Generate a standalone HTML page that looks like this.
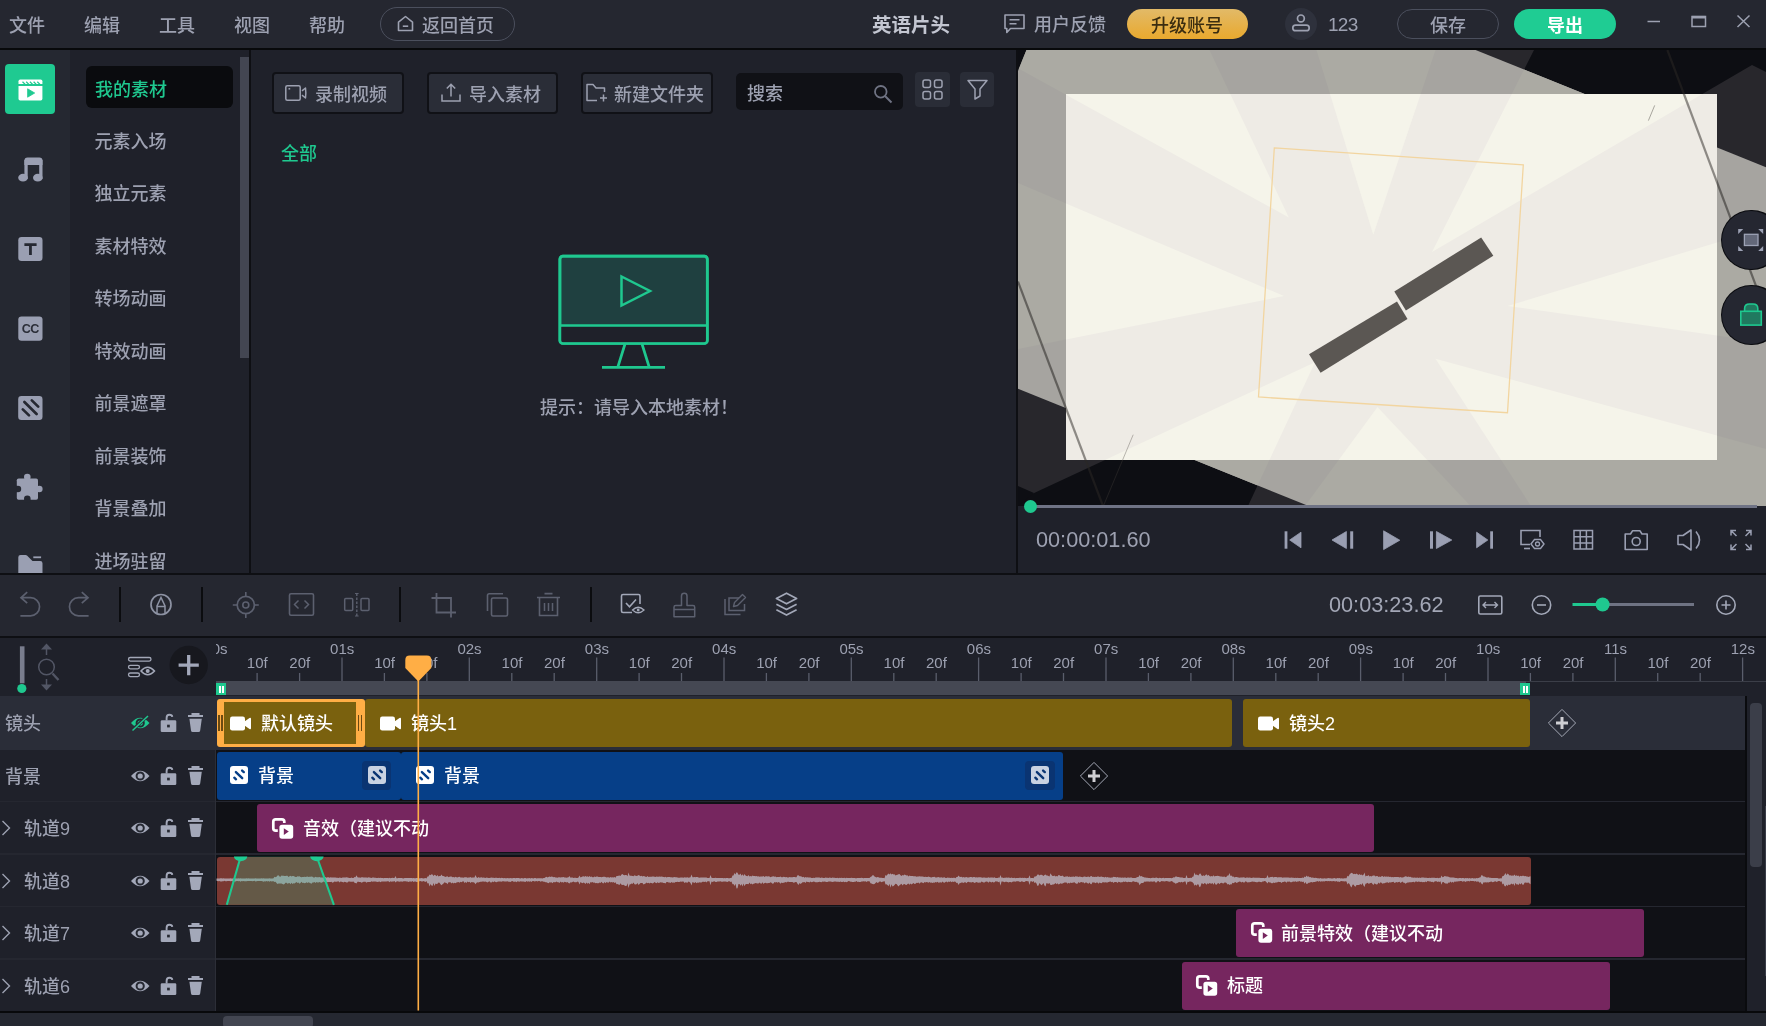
<!DOCTYPE html>
<html lang="zh-CN"><head><meta charset="utf-8"><title>英语片头</title>
<style>
html,body{margin:0;padding:0;background:#1f212a;}
body{width:1766px;height:1026px;overflow:hidden;font-family:"Liberation Sans","Noto Sans CJK SC",sans-serif;font-size:18px;color:#9da1b1;font-weight:500;}
#app{position:relative;width:1766px;height:1026px;overflow:hidden;will-change:transform;}
.abs{position:absolute;}
.t{position:absolute;white-space:nowrap;line-height:24px;height:24px;font-size:18px;}
svg{position:absolute;overflow:visible;}
/* top bar */
#top{position:absolute;left:0;top:0;width:1766px;height:48px;background:#252730;}
#topline{position:absolute;left:0;top:48px;width:1766px;height:2px;background:#08090b;}
.pill{position:absolute;box-sizing:border-box;border-radius:20px;text-align:center;}
/* left */
#iconcol{position:absolute;left:0;top:50px;width:70px;height:523px;background:#252831;}
#listcol{position:absolute;left:70px;top:50px;width:180px;height:523px;background:#1f212a;overflow:hidden;}
.vline{position:absolute;width:2px;background:#0e0f13;}
.hline{position:absolute;height:2px;background:#0e0f13;}
.btn{position:absolute;box-sizing:border-box;background:#2a2d37;border:2px solid #101116;border-radius:4px;}
.sq{position:absolute;background:#2a2d37;border-radius:4px;}
/* timeline */
.clip{position:absolute;border-radius:3px;height:48px;}
.ct{position:absolute;top:12px;color:#fff;font-size:18px;line-height:24px;white-space:nowrap;}
.rl{position:absolute;font-size:15px;line-height:15px;color:#9da1b1;white-space:nowrap;transform:translateX(-50%);}

</style></head>
<body>
<div id="app">
<div id="top"></div><div id="topline"></div>
<div class="t" style="left:9px;top:14px;">文件</div>
<div class="t" style="left:84px;top:14px;">编辑</div>
<div class="t" style="left:159px;top:14px;">工具</div>
<div class="t" style="left:234px;top:14px;">视图</div>
<div class="t" style="left:309px;top:14px;">帮助</div>
<div class="pill" style="left:380px;top:7px;width:135px;height:34px;border:1px solid #4b4f5d;"></div>
<svg style="left:397px;top:15px;" width="17" height="17" viewBox="0 0 17 17"><path d="M1.5 7.2 L8.5 1.5 L15.5 7.2 V15.5 H1.5 Z" fill="none" stroke="#9da1b1" stroke-width="1.6" stroke-linejoin="round"/><path d="M5.8 11.2 H11.2" stroke="#9da1b1" stroke-width="1.6"/></svg>
<div class="t" style="left:422px;top:14px;">返回首页</div>
<div class="t" style="left:872px;top:13px;font-size:19.5px;font-weight:bold;color:#c3c6d1;">英语片头</div>
<svg style="left:1004px;top:14px;" width="21" height="20" viewBox="0 0 21 20"><path d="M1 1 H20 V14.5 H6.5 L2.8 18.5 V14.5 H1 Z" fill="none" stroke="#9da1b1" stroke-width="1.6" stroke-linejoin="round"/><path d="M5.5 5.8 H15.5 M5.5 9.8 H12.5" stroke="#9da1b1" stroke-width="1.6"/></svg>
<div class="t" style="left:1034px;top:12.6px;">用户反馈</div>
<div class="pill" style="left:1127px;top:8.7px;width:120.5px;height:30.4px;background:linear-gradient(180deg,#e2ba68,#e9a92e);"></div>
<div class="t" style="left:1151px;top:14px;color:#3b2d10;">升级账号</div>
<div class="abs" style="left:1285px;top:8px;width:32px;height:32px;border-radius:50%;background:#2e313c;"></div>
<svg style="left:1290px;top:13px;" width="22" height="20" viewBox="1290 13 22 20"><circle cx="1300.9" cy="18.4" r="3.4" fill="none" stroke="#9da1b1" stroke-width="1.7"/><rect x="1292.8" y="25.1" width="16.4" height="5.6" rx="2.8" fill="none" stroke="#9da1b1" stroke-width="1.7"/></svg>
<div class="t" style="left:1328px;top:13px;font-size:19px;letter-spacing:-0.7px;">123</div>
<div class="pill" style="left:1397px;top:9px;width:102px;height:30px;border:1px solid #4b4f5d;"></div>
<div class="t" style="left:1430px;top:14px;">保存</div>
<div class="pill" style="left:1514px;top:9px;width:102px;height:30px;background:#1fcc93;"></div>
<div class="t" style="left:1547px;top:14px;color:#fff;font-weight:bold;">导出</div>
<svg style="left:1640px;top:10px;" width="120" height="24" viewBox="1640 10 120 24"><path d="M1647.5 21.5 H1660" stroke="#9da1b1" stroke-width="1.5"/><rect x="1692" y="16.5" width="13.5" height="10" fill="none" stroke="#9da1b1" stroke-width="1.5"/><path d="M1692 17.2 H1705.5" stroke="#9da1b1" stroke-width="2.6"/><path d="M1737.5 15.5 L1749.5 27 M1749.5 15.5 L1737.5 27" stroke="#9da1b1" stroke-width="1.5"/></svg>
<div id="iconcol"></div><div id="listcol"></div>
<div class="abs" style="left:5px;top:64px;width:50px;height:50px;border-radius:4px;background:#1fca91;"></div>
<svg style="left:18px;top:79px;" width="25" height="22" viewBox="18 79 25 22"><path d="M18.5 84 V81.2 Q18.5 79.5 20.2 79.5 H40.7 Q42.4 79.5 42.4 81.2 V84 Z" fill="#fff"/><path d="M22.5 81.8 L25.2 84.4 M26.2 81.8 L28.9 84.4 M29.9 81.8 L32.6 84.4 M33.6 81.8 L36.3 84.4 M37.3 81.8 L40 84.4" stroke="#1fca91" stroke-width="1.3"/><path d="M18.5 85.9 H42.4 V98.7 Q42.4 100.4 40.7 100.4 H20.2 Q18.5 100.4 18.5 98.7 Z" fill="#fff"/><path d="M27.6 88.8 L34.7 93 L27.6 97.2 Z" fill="#1fca91" stroke="#1fca91" stroke-width="0.8" stroke-linejoin="round"/></svg>
<svg style="left:18px;top:157px;" width="25" height="25" viewBox="18 157 25 25"><path d="M24.4 165 V160.6 Q24.4 157.4 27.6 157.4 H39.3 Q42.5 157.4 42.5 160.6 V165 Z" fill="#9a9fb2"/><rect x="24.4" y="160" width="3.3" height="19" fill="#9a9fb2"/><rect x="39.2" y="160" width="3.3" height="19" fill="#9a9fb2"/><ellipse cx="23" cy="177.7" rx="4.8" ry="3.9" fill="#9a9fb2"/><ellipse cx="37.8" cy="177.7" rx="4.8" ry="3.9" fill="#9a9fb2"/></svg>
<svg style="left:18px;top:237px;" width="25" height="25" viewBox="0 0 25 25"><rect x="0.3" y="0" width="24.2" height="24" rx="3.2" fill="#9a9fb2"/><path d="M6.4 7.55 H18.6 M12.45 7 V17.9" stroke="#252831" stroke-width="2.8"/></svg>
<svg style="left:18px;top:316px;" width="25" height="26" viewBox="0 0 25 26"><rect x="0.3" y="0.4" width="24.2" height="24.3" rx="3.2" fill="#9a9fb2"/><text x="12.2" y="16.9" font-family="Liberation Sans,sans-serif" font-weight="bold" font-size="12.6" letter-spacing="-0.6" fill="#2b2e38" text-anchor="middle">CC</text></svg>
<svg style="left:18px;top:396px;" width="25" height="25" viewBox="0 0 25 25"><rect x="0.2" y="0" width="24.3" height="24" rx="3.2" fill="#9a9fb2"/><path d="M6.4 6 L18.6 18 M13.8 4.4 L20.2 10.6 M4.8 13.4 L11 19.4" stroke="#252831" stroke-width="2.7" stroke-linecap="round"/></svg>
<svg style="left:16px;top:473px;" width="28" height="28" viewBox="16 473 28 28"><rect x="16.8" y="478.4" width="21.2" height="21.3" rx="1.8" fill="#9a9fb2"/><circle cx="27.3" cy="477" r="3.3" fill="#9a9fb2"/><circle cx="39.3" cy="489" r="3.3" fill="#9a9fb2"/><circle cx="17.9" cy="489" r="3.3" fill="#252831"/><circle cx="27.3" cy="498.8" r="3.3" fill="#252831"/><rect x="14" y="485.7" width="2.8" height="6.6" fill="#252831"/><rect x="24" y="499.7" width="6.6" height="2.5" fill="#252831"/></svg>
<svg style="left:18px;top:554.9px;" width="25" height="18.2" viewBox="0 0 25 18.2"><path d="M0.3 18.2 V2.3 Q0.3 0 2.6 0 H7.6 Q8.4 0 9 0.6 L14.5 5.9 H22.2 Q24.5 5.9 24.5 8.2 V18.2 Z" fill="#9a9fb2"/><path d="M15.3 2.3 H23.1" stroke="#9a9fb2" stroke-width="1.8"/></svg>
<div class="abs" style="left:86px;top:66px;width:147px;height:42px;border-radius:6px;background:#0a0b0e;"></div>
<div class="t" style="left:95px;top:78px;color:#1fc88f;">我的素材</div>
<div class="t" style="left:94.4px;top:129.7px;">元素入场</div>
<div class="t" style="left:94.4px;top:182.2px;">独立元素</div>
<div class="t" style="left:94.4px;top:234.7px;">素材特效</div>
<div class="t" style="left:94.4px;top:287.2px;">转场动画</div>
<div class="t" style="left:94.4px;top:339.7px;">特效动画</div>
<div class="t" style="left:94.4px;top:392.2px;">前景遮罩</div>
<div class="t" style="left:94.4px;top:444.7px;">前景装饰</div>
<div class="t" style="left:94.4px;top:497.2px;">背景叠加</div>
<div class="t" style="left:94.4px;top:549.7px;">进场驻留</div>
<div class="abs" style="left:240px;top:57px;width:9.3px;height:300.5px;background:#434652;"></div>
<div class="vline" style="left:249px;top:50px;height:523px;"></div>
<div class="vline" style="left:1016px;top:50px;height:523px;"></div>
<div class="btn" style="left:272px;top:72px;width:132px;height:42px;"></div>
<div class="btn" style="left:427px;top:72px;width:131px;height:42px;"></div>
<div class="btn" style="left:581px;top:72px;width:132px;height:42px;"></div>
<svg style="left:285px;top:85px;" width="22" height="16" viewBox="0 0 22 16"><rect x="0.8" y="0.8" width="14.4" height="14.4" rx="1.5" fill="none" stroke="#9da1b1" stroke-width="1.5"/><path d="M17 5.8 L20.5 3 Q21.2 8 20.5 13 L17 10.2" fill="none" stroke="#9da1b1" stroke-width="1.5" stroke-linejoin="round"/><path d="M3.5 3.8 H5.2" stroke="#9da1b1" stroke-width="1.5"/></svg>
<div class="t" style="left:315px;top:83px;">录制视频</div>
<svg style="left:441px;top:83px;" width="20" height="19" viewBox="0 0 20 19"><path d="M1 11.5 V18 H19 V11.5" fill="none" stroke="#9da1b1" stroke-width="1.5"/><path d="M10 13.5 V1.5 M5.8 5.5 L10 1.2 L14.2 5.5" fill="none" stroke="#9da1b1" stroke-width="1.5"/></svg>
<div class="t" style="left:469px;top:83px;">导入素材</div>
<svg style="left:586px;top:83px;" width="22" height="19" viewBox="0 0 22 19"><path d="M11 17.5 H1 V1.5 H7 L10 5 H18.5 V9" fill="none" stroke="#9da1b1" stroke-width="1.5" stroke-linejoin="round"/><path d="M17.5 11.5 V18.5 M14 15 H21" stroke="#9da1b1" stroke-width="1.5"/></svg>
<div class="t" style="left:614px;top:83px;">新建文件夹</div>
<div class="abs" style="left:736px;top:73px;width:167px;height:37px;border-radius:5px;background:#101116;"></div>
<div class="t" style="left:747px;top:82px;">搜索</div>
<svg style="left:873px;top:84px;" width="20" height="20" viewBox="0 0 20 20"><circle cx="7.8" cy="7.8" r="5.8" fill="none" stroke="#6f7383" stroke-width="1.8"/><path d="M12 12 L18.5 18.5" stroke="#6f7383" stroke-width="2"/></svg>
<div class="sq" style="left:915px;top:72px;width:35px;height:35px;"></div>
<div class="sq" style="left:960px;top:72px;width:34px;height:35px;"></div>
<svg style="left:922px;top:79px;" width="21" height="21" viewBox="0 0 21 21"><rect x="1" y="1" width="7.5" height="7.5" rx="2" fill="none" stroke="#9da1b1" stroke-width="1.5"/><rect x="12.5" y="1" width="7.5" height="7.5" rx="2" fill="none" stroke="#9da1b1" stroke-width="1.5"/><rect x="1" y="12.5" width="7.5" height="7.5" rx="2" fill="none" stroke="#9da1b1" stroke-width="1.5"/><rect x="12.5" y="12.5" width="7.5" height="7.5" rx="2" fill="none" stroke="#9da1b1" stroke-width="1.5"/></svg>
<svg style="left:967px;top:79px;" width="21" height="21" viewBox="0 0 21 21"><path d="M1 1.5 H20 L13 10 V17 L8 20 V10 Z" fill="none" stroke="#9da1b1" stroke-width="1.5" stroke-linejoin="round"/></svg>
<div class="t" style="left:281px;top:142px;color:#1fc88f;">全部</div>
<svg style="left:556px;top:253px;" width="156" height="118" viewBox="556 253 156 118"><rect x="559.9" y="256.2" width="147.4" height="87.3" rx="3" fill="#1f4040" stroke="#1fc88f" stroke-width="2.7"/><rect x="560.7" y="326.5" width="145.6" height="16" fill="#1f212a"/><rect x="559.9" y="256.2" width="147.4" height="87.3" rx="3" fill="none" stroke="#1fc88f" stroke-width="2.7"/><path d="M559.9 325.5 H707.3" stroke="#1fc88f" stroke-width="2.7"/><path d="M625 344 L618 366.5 M642 344 L649 366.5 M602 367.3 H665" stroke="#1fc88f" stroke-width="2.7" fill="none"/><path d="M621.5 276.5 L650 291 L621.5 305.5 Z" fill="none" stroke="#1fc88f" stroke-width="2.5" stroke-linejoin="miter"/></svg>
<div class="t" style="left:540px;top:395.5px;">提示：请导入本地素材！</div>
<svg style="left:1018px;top:50px;overflow:hidden;" width="748" height="456" viewBox="1018 50 748 456"><defs><clipPath id="rc"><polygon points="1089.4,-106.0 1889.0,217.0 1707.4,667.0 907.8,344.2"/></clipPath><clipPath id="cc"><rect x="1066" y="94" width="651" height="366"/></clipPath><g id="cream"><rect x="1018" y="50" width="748" height="456" fill="#eeebe5"/><polygon points="1284.0,296.0 1018.0,183.0 1018.0,349.0" fill="#f5f4ea"/><polygon points="1288.8,217.4 1209.4,50.0 1018.0,50.0 1018.0,68.3" fill="#f5f4ea"/><polygon points="1373.3,234.8 1316.5,50.0 1435.5,50.0" fill="#f5f4ea"/><polygon points="1432.0,252.0 1534.0,50.0 1766.0,50.0 1766.0,72.0 1752.0,65.0" fill="#f5f4ea"/><polygon points="1507.5,306.0 1766.0,227.7 1766.0,342.4" fill="#f5f4ea"/><polygon points="1435.5,358.7 1766.0,449.0 1766.0,506.0 1531.0,506.0" fill="#f5f4ea"/><polygon points="1377.5,407.0 1305.0,506.0 1470.5,506.0" fill="#f5f4ea"/><polygon points="1315.0,362.3 1006.0,506.0 1248.0,506.0" fill="#f5f4ea"/><polygon points="1034.0,493.0 1018.0,486.0 1018.0,506.0" fill="#f5f4ea"/></g></defs><rect x="1018" y="50" width="748" height="456" fill="#3a3940"/><polygon points="1284.0,296.0 1018.0,183.0 1018.0,349.0" fill="#14151c"/><polygon points="1288.8,217.4 1209.4,50.0 1018.0,50.0 1018.0,68.3" fill="#14151c"/><polygon points="1373.3,234.8 1316.5,50.0 1435.5,50.0" fill="#14151c"/><polygon points="1432.0,252.0 1534.0,50.0 1766.0,50.0 1766.0,72.0 1752.0,65.0" fill="#14151c"/><polygon points="1507.5,306.0 1766.0,227.7 1766.0,342.4" fill="#14151c"/><polygon points="1435.5,358.7 1766.0,449.0 1766.0,506.0 1531.0,506.0" fill="#14151c"/><polygon points="1377.5,407.0 1305.0,506.0 1470.5,506.0" fill="#14151c"/><polygon points="1315.0,362.3 1006.0,506.0 1248.0,506.0" fill="#14151c"/><polygon points="1034.0,493.0 1018.0,486.0 1018.0,506.0" fill="#14151c"/><use href="#cream" clip-path="url(#rc)"/><use href="#cream" clip-path="url(#cc)"/><polygon points="1274.3,147.9 1523.3,164.8 1507.5,412.7 1258.5,397" fill="none" stroke="#f2d5a0" stroke-width="1.3"/><polygon points="1481.2,237.4 1493.3,255.8 1405.9,310.6 1394.3,291.6" fill="#5b5753"/><polygon points="1397,301.6 1407.5,319 1320.6,372.7 1309,354.3" fill="#5b5753"/><path d="M1018 281.6 L1103 506" stroke="rgba(60,56,52,0.55)" stroke-width="2.2"/><path d="M1667.4 50 L1766 312.6" stroke="rgba(60,56,52,0.55)" stroke-width="2.2"/><path d="M1133.2 434.7 L1103.8 505" stroke="rgba(90,85,80,0.4)" stroke-width="1"/><path d="M1654.7 105.4 L1648.4 120.6" stroke="rgba(90,85,80,0.5)" stroke-width="1"/><path fill-rule="evenodd" fill="rgba(0,0,0,0.3)" d="M1018 50 H1766 V506 H1018 Z M1066 94 H1717 V460 H1066 Z"/></svg>
<div class="abs" style="left:1721px;top:209.6px;width:60.6px;height:60.6px;border-radius:50%;background:#0b0c10;"></div>
<div class="abs" style="left:1722.3px;top:210.9px;width:58px;height:58px;border-radius:50%;background:#252731;"></div>
<div class="abs" style="left:1721px;top:284.5px;width:60.6px;height:60.6px;border-radius:50%;background:#0b0c10;"></div>
<div class="abs" style="left:1722.3px;top:285.8px;width:58px;height:58px;border-radius:50%;background:#252731;"></div>
<svg style="left:1736px;top:226px;" width="30" height="28" viewBox="1736 226 30 28"><rect x="1744.4" y="234.3" width="13.6" height="11.2" fill="#636879" stroke="#9da2b5" stroke-width="1.3"/><path d="M1738.2 229.1 H1743.2 L1738.2 234.1 Z M1763.2 229.1 V234.1 L1758.2 229.1 Z M1738.2 251 V246 L1743.2 251 Z M1763.2 251 H1758.2 L1763.2 246 Z" fill="#9da2b5"/></svg>
<svg style="left:1736px;top:300px;" width="30" height="28" viewBox="1736 300 30 28"><path d="M1744.6 311 V308.5 Q1744.6 304 1749.5 304 H1753 Q1757.8 304 1757.8 308.5 V311" fill="#20795f" stroke="#1fc88f" stroke-width="1.6"/><rect x="1740.8" y="311.3" width="20.5" height="13.8" fill="#20795f" stroke="#1fc88f" stroke-width="1.6"/></svg>
<div class="abs" style="left:1030px;top:505px;width:727px;height:3px;background:#6f7385;"></div>
<div class="abs" style="left:1024px;top:499.5px;width:13px;height:13px;border-radius:50%;background:#1fc88f;"></div>
<div class="t" style="left:1036px;top:527.5px;font-size:21.7px;color:#9da1b1;">00:00:01.60</div>
<svg style="left:1280px;top:525px;" width="480" height="30" viewBox="1280 525 480 30"><path d="M1286 531.3 V548.7" stroke="#9a9fb2" stroke-width="2.8"/><path d="M1301 532.2 V547.8 L1289.7 540 Z" fill="#9a9fb2" stroke="#9a9fb2" stroke-width="0.8" stroke-linejoin="round"/><path d="M1346.4 531.5 V548.5 L1332 540 Z" fill="#9a9fb2" stroke="#9a9fb2" stroke-width="0.8" stroke-linejoin="round"/><path d="M1351.7 531.3 V548.7" stroke="#9a9fb2" stroke-width="3"/><path d="M1383.6 530.8 V549.6 L1399.8 540.2 Z" fill="#9a9fb2" stroke="#9a9fb2" stroke-width="0.8" stroke-linejoin="round"/><path d="M1436.4 531.5 V548.5 L1451.8 540 Z" fill="#9a9fb2" stroke="#9a9fb2" stroke-width="0.8" stroke-linejoin="round"/><path d="M1431.5 531.3 V548.7" stroke="#9a9fb2" stroke-width="3"/><path d="M1476.6 532.2 V547.8 L1487.8 540 Z" fill="#9a9fb2" stroke="#9a9fb2" stroke-width="0.8" stroke-linejoin="round"/><path d="M1491.6 531.3 V548.7" stroke="#9a9fb2" stroke-width="2.8"/><path d="M1530 544.5 H1521 V530.5 H1540 V537" fill="none" stroke="#9a9fb2" stroke-width="1.6"/><path d="M1524 548.5 H1530" stroke="#9a9fb2" stroke-width="1.6"/><path d="M1531 544 L1534.5 539.5 H1540.5 L1544 544 L1540.5 548.5 H1534.5 Z" fill="none" stroke="#9a9fb2" stroke-width="1.4"/><circle cx="1537.5" cy="544" r="2" fill="none" stroke="#9a9fb2" stroke-width="1.3"/><rect x="1574" y="530.5" width="18.5" height="18.5" fill="none" stroke="#9a9fb2" stroke-width="1.5"/><path d="M1580.2 530.5 V549 M1586.4 530.5 V549 M1574 536.7 H1592.5 M1574 542.9 H1592.5" stroke="#9a9fb2" stroke-width="1.5"/><path d="M1625.2 534 H1630.5 L1632.5 530.8 H1640 L1642 534 H1647.2 V549.5 H1625.2 Z" fill="none" stroke="#9a9fb2" stroke-width="1.6" stroke-linejoin="round"/><circle cx="1636.2" cy="541.5" r="4" fill="none" stroke="#9a9fb2" stroke-width="1.6"/><path d="M1678 535.5 H1683 L1691 530 V550 L1683 544.5 H1678 Z" fill="none" stroke="#9a9fb2" stroke-width="1.6" stroke-linejoin="round"/><path d="M1696 531.5 Q1703 540 1696 548.5" fill="none" stroke="#9a9fb2" stroke-width="1.6"/><path d="M1731 535.5 V530.5 H1736 M1731 530.5 L1736.5 536 M1746 530.5 H1751 V535.5 M1751 530.5 L1745.5 536 M1731 544.5 V549.5 H1736 M1731 549.5 L1736.5 544 M1746 549.5 H1751 V544.5 M1751 549.5 L1745.5 544" fill="none" stroke="#9a9fb2" stroke-width="1.5"/></svg>
<div class="hline" style="left:0;top:573px;width:1766px;height:2px;"></div>
<div class="abs" style="left:0;top:575px;width:1766px;height:61px;background:#252730;"></div>
<div class="hline" style="left:0;top:636px;width:1766px;height:2px;"></div>
<svg style="left:0;top:575px;" width="1766" height="61" viewBox="0 575 1766 61"><path d="M120 587 V622" stroke="#0b0c0f" stroke-width="2"/><path d="M202 587 V622" stroke="#0b0c0f" stroke-width="2"/><path d="M400 587 V622" stroke="#0b0c0f" stroke-width="2"/><path d="M591 587 V622" stroke="#0b0c0f" stroke-width="2"/><path d="M20.4 615.8 H30.5 A9.05 9.05 0 0 0 30.5 597.7 H21 M27.2 592.2 L21 597.7 L27.2 603.2" fill="none" stroke="#5c606f" stroke-width="1.7"/><path d="M88.6 615.8 H78.5 A9.05 9.05 0 0 1 78.5 597.7 H88 M81.8 592.2 L88 597.7 L81.8 603.2" fill="none" stroke="#5c606f" stroke-width="1.7"/><circle cx="161" cy="604.5" r="10" fill="none" stroke="#8d92a3" stroke-width="1.7"/><path d="M157 613.5 V606 L161 597.5 L165 606 V613.5 M157 606.5 H165" fill="none" stroke="#8d92a3" stroke-width="1.5"/><circle cx="245.8" cy="605" r="8.6" fill="none" stroke="#5c606f" stroke-width="1.7"/><circle cx="245.8" cy="605" r="3" fill="none" stroke="#5c606f" stroke-width="1.6"/><path d="M245.8 592 V596.4 M245.8 613.6 V618 M232.8 605 H237.2 M254.4 605 H258.8" stroke="#5c606f" stroke-width="1.6"/><rect x="289.5" y="593.8" width="24" height="21.5" rx="1.5" fill="none" stroke="#5c606f" stroke-width="1.6"/><path d="M298.5 600.5 L294.5 604.5 L298.5 608.5 M304.5 600.5 L308.5 604.5 L304.5 608.5" fill="none" stroke="#5c606f" stroke-width="1.5"/><rect x="344.7" y="598.5" width="8" height="12" rx="1" fill="none" stroke="#5c606f" stroke-width="1.5"/><rect x="361" y="598.5" width="8" height="12" rx="1" fill="none" stroke="#5c606f" stroke-width="1.5"/><path d="M356.8 593.5 V616" stroke="#5c606f" stroke-width="1.4" stroke-dasharray="2.5 1.5"/><path d="M355 593.5 H358.6 M355 616 H358.6" stroke="#5c606f" stroke-width="1.2"/><path d="M436.5 593 V612.5 H456 M431.5 598 H451 V617.5" fill="none" stroke="#5c606f" stroke-width="1.8"/><rect x="491.5" y="598" width="16" height="18" rx="1.5" fill="none" stroke="#5c606f" stroke-width="1.6"/><path d="M487.5 611 V595.5 Q487.5 593.8 489.2 593.8 H503" fill="none" stroke="#5c606f" stroke-width="1.6"/><path d="M537 597.5 H560 M544.5 593.6 H552.5 M539.5 598 V615.5 H557.5 V598" fill="none" stroke="#5c606f" stroke-width="1.6"/><path d="M544.5 603 V611 M548.5 603 V611 M552.5 603 V611" stroke="#5c606f" stroke-width="1.5"/><path d="M632 612.5 H623 Q621.5 612.5 621.5 611 V596 Q621.5 594.5 623 594.5 H638.5 Q640 594.5 640 596 V604" fill="none" stroke="#a3a8b8" stroke-width="1.6"/><path d="M626 603 L629.5 606.8 L636 599.5" fill="none" stroke="#a3a8b8" stroke-width="1.6"/><path d="M632.5 610 Q638.2 604.5 644 610 Q638.2 615.5 632.5 610 Z" fill="none" stroke="#a3a8b8" stroke-width="1.3"/><circle cx="638.2" cy="610" r="1.4" fill="#a3a8b8"/><path d="M681.5 605.5 V596 Q681.5 593.3 684.3 593.3 Q687 593.3 687 596 V605.5 H693 Q694.7 605.5 694.7 607.2 V616.7 H674 V607.2 Q674 605.5 675.7 605.5 Z M674 609.5 H694.7" fill="none" stroke="#5c606f" stroke-width="1.5" stroke-linejoin="round"/><path d="M725 599 V614.5 H740.5 M739 598 H729 V610.5 H744.5 V604" fill="none" stroke="#5c606f" stroke-width="1.5"/><path d="M733.5 606.5 L734.5 602.5 L742.5 594.5 L745.5 597.5 L737.5 605.5 Z" fill="none" stroke="#5c606f" stroke-width="1.4" stroke-linejoin="round"/><path d="M786.5 593.2 L796.6 598.5 L786.5 603.8 L776.4 598.5 Z" fill="none" stroke="#a3a8b8" stroke-width="1.7" stroke-linejoin="round"/><path d="M776.4 604.2 L786.5 609.5 L796.6 604.2 M776.4 609.8 L786.5 615.1 L796.6 609.8" fill="none" stroke="#a3a8b8" stroke-width="1.7" stroke-linejoin="round"/><rect x="1478.8" y="596" width="23" height="18" rx="1.5" fill="none" stroke="#a3a8b8" stroke-width="1.6"/><path d="M1483 605 H1497.5 M1486 602 L1483 605 L1486 608 M1494.5 602 L1497.5 605 L1494.5 608" fill="none" stroke="#a3a8b8" stroke-width="1.4"/><circle cx="1541.5" cy="605" r="9.2" fill="none" stroke="#a3a8b8" stroke-width="1.6"/><path d="M1537 605 H1546" stroke="#a3a8b8" stroke-width="1.6"/><circle cx="1726" cy="605" r="9.2" fill="none" stroke="#a3a8b8" stroke-width="1.6"/><path d="M1721.5 605 H1730.5 M1726 600.5 V609.5" stroke="#a3a8b8" stroke-width="1.6"/><path d="M1572.5 604.5 H1602" stroke="#1fc88f" stroke-width="3"/><path d="M1602 604.5 H1694" stroke="#6f7383" stroke-width="3"/><circle cx="1602.6" cy="604.5" r="7" fill="#1fc88f"/></svg>
<div class="t" style="left:1329px;top:592.5px;font-size:21.7px;color:#a3a7b6;">00:03:23.62</div>
<div class="abs" style="left:0;top:638px;width:216px;height:58px;background:#1f212a;"></div>
<div class="abs" style="left:216px;top:638px;width:1550px;height:43px;background:#1f212a;overflow:hidden;" id="ruler">
<svg style="left:0;top:0;" width="1550" height="43"><path d="M-1.3 19.5 V43" stroke="#5a5e6c" stroke-width="1.3"/><path d="M41.1 35 V43" stroke="#5a5e6c" stroke-width="1.3"/><path d="M83.6 35 V43" stroke="#5a5e6c" stroke-width="1.3"/><path d="M126.0 19.5 V43" stroke="#5a5e6c" stroke-width="1.3"/><path d="M168.4 35 V43" stroke="#5a5e6c" stroke-width="1.3"/><path d="M210.9 35 V43" stroke="#5a5e6c" stroke-width="1.3"/><path d="M253.3 19.5 V43" stroke="#5a5e6c" stroke-width="1.3"/><path d="M295.8 35 V43" stroke="#5a5e6c" stroke-width="1.3"/><path d="M338.2 35 V43" stroke="#5a5e6c" stroke-width="1.3"/><path d="M380.7 19.5 V43" stroke="#5a5e6c" stroke-width="1.3"/><path d="M423.1 35 V43" stroke="#5a5e6c" stroke-width="1.3"/><path d="M465.5 35 V43" stroke="#5a5e6c" stroke-width="1.3"/><path d="M508.0 19.5 V43" stroke="#5a5e6c" stroke-width="1.3"/><path d="M550.4 35 V43" stroke="#5a5e6c" stroke-width="1.3"/><path d="M592.9 35 V43" stroke="#5a5e6c" stroke-width="1.3"/><path d="M635.3 19.5 V43" stroke="#5a5e6c" stroke-width="1.3"/><path d="M677.8 35 V43" stroke="#5a5e6c" stroke-width="1.3"/><path d="M720.2 35 V43" stroke="#5a5e6c" stroke-width="1.3"/><path d="M762.6 19.5 V43" stroke="#5a5e6c" stroke-width="1.3"/><path d="M805.1 35 V43" stroke="#5a5e6c" stroke-width="1.3"/><path d="M847.5 35 V43" stroke="#5a5e6c" stroke-width="1.3"/><path d="M890.0 19.5 V43" stroke="#5a5e6c" stroke-width="1.3"/><path d="M932.4 35 V43" stroke="#5a5e6c" stroke-width="1.3"/><path d="M974.9 35 V43" stroke="#5a5e6c" stroke-width="1.3"/><path d="M1017.3 19.5 V43" stroke="#5a5e6c" stroke-width="1.3"/><path d="M1059.8 35 V43" stroke="#5a5e6c" stroke-width="1.3"/><path d="M1102.2 35 V43" stroke="#5a5e6c" stroke-width="1.3"/><path d="M1144.6 19.5 V43" stroke="#5a5e6c" stroke-width="1.3"/><path d="M1187.1 35 V43" stroke="#5a5e6c" stroke-width="1.3"/><path d="M1229.5 35 V43" stroke="#5a5e6c" stroke-width="1.3"/><path d="M1272.0 19.5 V43" stroke="#5a5e6c" stroke-width="1.3"/><path d="M1314.4 35 V43" stroke="#5a5e6c" stroke-width="1.3"/><path d="M1356.9 35 V43" stroke="#5a5e6c" stroke-width="1.3"/><path d="M1399.3 19.5 V43" stroke="#5a5e6c" stroke-width="1.3"/><path d="M1441.7 35 V43" stroke="#5a5e6c" stroke-width="1.3"/><path d="M1484.2 35 V43" stroke="#5a5e6c" stroke-width="1.3"/><path d="M1526.6 19.5 V43" stroke="#5a5e6c" stroke-width="1.3"/></svg>
<div class="rl" style="left:7.7px;top:3px;transform:none;margin-left:-12px;">0s</div>
<div class="rl" style="left:41.3px;top:16.5px;">10f</div>
<div class="rl" style="left:83.8px;top:16.5px;">20f</div>
<div class="rl" style="left:126.2px;top:3px;">01s</div>
<div class="rl" style="left:168.6px;top:16.5px;">10f</div>
<div class="rl" style="left:211.1px;top:16.5px;">20f</div>
<div class="rl" style="left:253.5px;top:3px;">02s</div>
<div class="rl" style="left:296.0px;top:16.5px;">10f</div>
<div class="rl" style="left:338.4px;top:16.5px;">20f</div>
<div class="rl" style="left:380.9px;top:3px;">03s</div>
<div class="rl" style="left:423.3px;top:16.5px;">10f</div>
<div class="rl" style="left:465.7px;top:16.5px;">20f</div>
<div class="rl" style="left:508.2px;top:3px;">04s</div>
<div class="rl" style="left:550.6px;top:16.5px;">10f</div>
<div class="rl" style="left:593.1px;top:16.5px;">20f</div>
<div class="rl" style="left:635.5px;top:3px;">05s</div>
<div class="rl" style="left:678.0px;top:16.5px;">10f</div>
<div class="rl" style="left:720.4px;top:16.5px;">20f</div>
<div class="rl" style="left:762.9px;top:3px;">06s</div>
<div class="rl" style="left:805.3px;top:16.5px;">10f</div>
<div class="rl" style="left:847.7px;top:16.5px;">20f</div>
<div class="rl" style="left:890.2px;top:3px;">07s</div>
<div class="rl" style="left:932.6px;top:16.5px;">10f</div>
<div class="rl" style="left:975.1px;top:16.5px;">20f</div>
<div class="rl" style="left:1017.5px;top:3px;">08s</div>
<div class="rl" style="left:1060.0px;top:16.5px;">10f</div>
<div class="rl" style="left:1102.4px;top:16.5px;">20f</div>
<div class="rl" style="left:1144.8px;top:3px;">09s</div>
<div class="rl" style="left:1187.3px;top:16.5px;">10f</div>
<div class="rl" style="left:1229.7px;top:16.5px;">20f</div>
<div class="rl" style="left:1272.2px;top:3px;">10s</div>
<div class="rl" style="left:1314.6px;top:16.5px;">10f</div>
<div class="rl" style="left:1357.1px;top:16.5px;">20f</div>
<div class="rl" style="left:1399.5px;top:3px;">11s</div>
<div class="rl" style="left:1441.9px;top:16.5px;">10f</div>
<div class="rl" style="left:1484.4px;top:16.5px;">20f</div>
<div class="rl" style="left:1526.8px;top:3px;">12s</div>
</div>
<div class="abs" style="left:216px;top:681px;width:1550px;height:14px;background:#1f212a;"></div>
<div class="abs" style="left:216px;top:680.8px;width:1550px;height:1.2px;background:#3b3e48;"></div>
<div class="abs" style="left:216px;top:681px;width:1310px;height:14px;background:#454853;"></div>
<div class="abs" style="left:216px;top:683px;width:10px;height:12px;background:#1fc88f;"></div>
<div class="abs" style="left:219px;top:685.5px;width:1.5px;height:7px;background:#fff;"></div><div class="abs" style="left:222px;top:685.5px;width:1.5px;height:7px;background:#fff;"></div>
<div class="abs" style="left:1520px;top:683px;width:10px;height:12px;background:#1fc88f;"></div>
<div class="abs" style="left:1523px;top:685.5px;width:1.5px;height:7px;background:#fff;"></div><div class="abs" style="left:1526px;top:685.5px;width:1.5px;height:7px;background:#fff;"></div>
<svg style="left:0;top:638px;" width="216" height="58" viewBox="0 638 216 58"><rect x="19.9" y="646.3" width="4.6" height="37" fill="#797d8d"/><circle cx="21.8" cy="688.5" r="4.6" fill="#1fc88f"/><circle cx="46.5" cy="667" r="7.8" fill="none" stroke="#525665" stroke-width="1.5"/><path d="M52.5 673.5 L58.5 680" stroke="#525665" stroke-width="2.4"/><path d="M46.5 655 V647" stroke="#525665" stroke-width="1.5"/><path d="M41 649.5 L46.5 643.5 L52 649.5 Z" fill="#525665"/><path d="M46.5 679 V687" stroke="#525665" stroke-width="1.5"/><path d="M41 684.5 L46.5 690.5 L52 684.5 Z" fill="#525665"/><rect x="128.5" y="657.5" width="22.5" height="3.6" rx="1.8" fill="none" stroke="#a3a8b8" stroke-width="1.3"/><rect x="128.5" y="665.3" width="11" height="3.6" rx="1.8" fill="none" stroke="#a3a8b8" stroke-width="1.3"/><rect x="128.5" y="673" width="11" height="3.6" rx="1.8" fill="none" stroke="#a3a8b8" stroke-width="1.3"/><path d="M141 671 Q147.7 663.5 154.5 671 Q147.7 678.5 141 671 Z" fill="none" stroke="#a3a8b8" stroke-width="1.5"/><circle cx="147.7" cy="671" r="2" fill="#a3a8b8"/><circle cx="188.7" cy="665" r="19.2" fill="#17181e"/><path d="M178.6 665.2 H198.8 M188.7 655.1 V675.3" stroke="#a3a8ba" stroke-width="3.3"/></svg>
<div class="abs" style="left:0;top:696px;width:216px;height:315px;background:#1f212a;"></div>
<div class="abs" style="left:216px;top:696px;width:1529px;height:315px;background:#101116;"></div>
<div class="abs" style="left:0;top:696px;width:1745px;height:54px;background:#2a2d38;"></div>
<div class="abs" style="left:0;top:800.7px;width:1745px;height:1.6px;background:#252730;"></div>
<div class="abs" style="left:0;top:853.2px;width:1745px;height:1.6px;background:#252730;"></div>
<div class="abs" style="left:0;top:905.6px;width:1745px;height:1.6px;background:#252730;"></div>
<div class="abs" style="left:0;top:958.0px;width:1745px;height:1.6px;background:#252730;"></div>
<div class="abs" style="left:215px;top:750px;width:1.3px;height:261px;background:#2c2e37;"></div>
<div class="abs" style="left:1745px;top:696px;width:21px;height:315px;background:#1f212a;"></div>
<div class="abs" style="left:1745px;top:696px;width:2px;height:315px;background:#0a0b0e;"></div>
<div class="abs" style="left:1749.6px;top:703px;width:12.4px;height:164px;border-radius:4px;background:#3b3e49;"></div>
<div class="abs" style="left:1764.5px;top:806px;width:1.5px;height:170px;background:#3a3d48;"></div>
<div class="abs" style="left:0;top:1011px;width:1766px;height:15px;background:#252831;"></div>
<div class="abs" style="left:0;top:1010.5px;width:1766px;height:2px;background:#08090b;"></div>
<div class="abs" style="left:223px;top:1016px;width:90px;height:12px;border-radius:4px;background:#434651;"></div>
<div class="t" style="left:5px;top:712.0px;color:#9da1b1;">镜头</div>
<svg style="left:128px;top:711.0px;" width="80" height="24" viewBox="128 -12 80 24"><path d="M131 0 Q140.2 -10.5 149.5 0 Q140.2 10.5 131 0 Z" fill="#1fc88f"/><circle cx="140.2" cy="0" r="3.6" fill="none" stroke="#252831" stroke-width="2"/><path d="M132.5 7 L148 -7.5" stroke="#2a2d38" stroke-width="3.4"/><path d="M132.5 7.5 L148 -7" stroke="#1fc88f" stroke-width="1.5"/><rect x="160.7" y="-2.7" width="15.6" height="11.8" rx="1.3" fill="#a3a8b9"/><path d="M166.6 -2.5 V-5 Q166.6 -8.2 169.4 -8.2 Q172 -8.2 172.3 -6.2" fill="none" stroke="#a3a8b9" stroke-width="1.9"/><rect x="167.1" y="1.7" width="2.7" height="2.7" fill="#252831"/><path d="M188 -7 H203 M192.6 -8 V-9 H198.4 V-8" fill="none" stroke="#a3a8b9" stroke-width="2.2"/><path d="M189.4 -4.3 H201.8 L200.2 7.6 Q200 9.1 198.5 9.1 H192.7 Q191.2 9.1 191 7.6 Z" fill="#a3a8b9"/></svg>
<div class="t" style="left:5px;top:764.5px;color:#9da1b1;">背景</div>
<svg style="left:128px;top:763.5px;" width="80" height="24" viewBox="128 -12 80 24"><path d="M131 0 Q140.2 -10.5 149.5 0 Q140.2 10.5 131 0 Z" fill="#a3a8b9"/><circle cx="140.2" cy="0" r="3.6" fill="none" stroke="#252831" stroke-width="2"/><rect x="160.7" y="-2.7" width="15.6" height="11.8" rx="1.3" fill="#a3a8b9"/><path d="M166.6 -2.5 V-5 Q166.6 -8.2 169.4 -8.2 Q172 -8.2 172.3 -6.2" fill="none" stroke="#a3a8b9" stroke-width="1.9"/><rect x="167.1" y="1.7" width="2.7" height="2.7" fill="#252831"/><path d="M188 -7 H203 M192.6 -8 V-9 H198.4 V-8" fill="none" stroke="#a3a8b9" stroke-width="2.2"/><path d="M189.4 -4.3 H201.8 L200.2 7.6 Q200 9.1 198.5 9.1 H192.7 Q191.2 9.1 191 7.6 Z" fill="#a3a8b9"/></svg>
<div class="t" style="left:24px;top:817.0px;color:#9da1b1;">轨道9</div>
<svg style="left:1px;top:819.0px;" width="10" height="18" viewBox="0 0 10 18"><path d="M1.5 2 L8.5 9 L1.5 16" fill="none" stroke="#9da1b1" stroke-width="1.4"/></svg>
<svg style="left:128px;top:816.0px;" width="80" height="24" viewBox="128 -12 80 24"><path d="M131 0 Q140.2 -10.5 149.5 0 Q140.2 10.5 131 0 Z" fill="#a3a8b9"/><circle cx="140.2" cy="0" r="3.6" fill="none" stroke="#252831" stroke-width="2"/><rect x="160.7" y="-2.7" width="15.6" height="11.8" rx="1.3" fill="#a3a8b9"/><path d="M166.6 -2.5 V-5 Q166.6 -8.2 169.4 -8.2 Q172 -8.2 172.3 -6.2" fill="none" stroke="#a3a8b9" stroke-width="1.9"/><rect x="167.1" y="1.7" width="2.7" height="2.7" fill="#252831"/><path d="M188 -7 H203 M192.6 -8 V-9 H198.4 V-8" fill="none" stroke="#a3a8b9" stroke-width="2.2"/><path d="M189.4 -4.3 H201.8 L200.2 7.6 Q200 9.1 198.5 9.1 H192.7 Q191.2 9.1 191 7.6 Z" fill="#a3a8b9"/></svg>
<div class="t" style="left:24px;top:869.5px;color:#9da1b1;">轨道8</div>
<svg style="left:1px;top:871.5px;" width="10" height="18" viewBox="0 0 10 18"><path d="M1.5 2 L8.5 9 L1.5 16" fill="none" stroke="#9da1b1" stroke-width="1.4"/></svg>
<svg style="left:128px;top:868.5px;" width="80" height="24" viewBox="128 -12 80 24"><path d="M131 0 Q140.2 -10.5 149.5 0 Q140.2 10.5 131 0 Z" fill="#a3a8b9"/><circle cx="140.2" cy="0" r="3.6" fill="none" stroke="#252831" stroke-width="2"/><rect x="160.7" y="-2.7" width="15.6" height="11.8" rx="1.3" fill="#a3a8b9"/><path d="M166.6 -2.5 V-5 Q166.6 -8.2 169.4 -8.2 Q172 -8.2 172.3 -6.2" fill="none" stroke="#a3a8b9" stroke-width="1.9"/><rect x="167.1" y="1.7" width="2.7" height="2.7" fill="#252831"/><path d="M188 -7 H203 M192.6 -8 V-9 H198.4 V-8" fill="none" stroke="#a3a8b9" stroke-width="2.2"/><path d="M189.4 -4.3 H201.8 L200.2 7.6 Q200 9.1 198.5 9.1 H192.7 Q191.2 9.1 191 7.6 Z" fill="#a3a8b9"/></svg>
<div class="t" style="left:24px;top:922.0px;color:#9da1b1;">轨道7</div>
<svg style="left:1px;top:924.0px;" width="10" height="18" viewBox="0 0 10 18"><path d="M1.5 2 L8.5 9 L1.5 16" fill="none" stroke="#9da1b1" stroke-width="1.4"/></svg>
<svg style="left:128px;top:921.0px;" width="80" height="24" viewBox="128 -12 80 24"><path d="M131 0 Q140.2 -10.5 149.5 0 Q140.2 10.5 131 0 Z" fill="#a3a8b9"/><circle cx="140.2" cy="0" r="3.6" fill="none" stroke="#252831" stroke-width="2"/><rect x="160.7" y="-2.7" width="15.6" height="11.8" rx="1.3" fill="#a3a8b9"/><path d="M166.6 -2.5 V-5 Q166.6 -8.2 169.4 -8.2 Q172 -8.2 172.3 -6.2" fill="none" stroke="#a3a8b9" stroke-width="1.9"/><rect x="167.1" y="1.7" width="2.7" height="2.7" fill="#252831"/><path d="M188 -7 H203 M192.6 -8 V-9 H198.4 V-8" fill="none" stroke="#a3a8b9" stroke-width="2.2"/><path d="M189.4 -4.3 H201.8 L200.2 7.6 Q200 9.1 198.5 9.1 H192.7 Q191.2 9.1 191 7.6 Z" fill="#a3a8b9"/></svg>
<div class="t" style="left:24px;top:974.5px;color:#9da1b1;">轨道6</div>
<svg style="left:1px;top:976.5px;" width="10" height="18" viewBox="0 0 10 18"><path d="M1.5 2 L8.5 9 L1.5 16" fill="none" stroke="#9da1b1" stroke-width="1.4"/></svg>
<svg style="left:128px;top:973.5px;" width="80" height="24" viewBox="128 -12 80 24"><path d="M131 0 Q140.2 -10.5 149.5 0 Q140.2 10.5 131 0 Z" fill="#a3a8b9"/><circle cx="140.2" cy="0" r="3.6" fill="none" stroke="#252831" stroke-width="2"/><rect x="160.7" y="-2.7" width="15.6" height="11.8" rx="1.3" fill="#a3a8b9"/><path d="M166.6 -2.5 V-5 Q166.6 -8.2 169.4 -8.2 Q172 -8.2 172.3 -6.2" fill="none" stroke="#a3a8b9" stroke-width="1.9"/><rect x="167.1" y="1.7" width="2.7" height="2.7" fill="#252831"/><path d="M188 -7 H203 M192.6 -8 V-9 H198.4 V-8" fill="none" stroke="#a3a8b9" stroke-width="2.2"/><path d="M189.4 -4.3 H201.8 L200.2 7.6 Q200 9.1 198.5 9.1 H192.7 Q191.2 9.1 191 7.6 Z" fill="#a3a8b9"/></svg>
<div class="clip" style="left:365px;top:699px;width:866.5px;background:#7a610e;"></div>
<div class="clip" style="left:1242.5px;top:699px;width:287.5px;background:#7a610e;"></div>
<div class="clip" style="left:216.5px;top:699px;width:148px;background:#ffae45;"></div>
<div class="abs" style="left:224px;top:702.3px;width:131.5px;height:41.5px;background:#7a610e;"></div>
<div class="abs" style="left:218.3px;top:715px;width:1.5px;height:16px;background:#6b4a12;"></div>
<div class="abs" style="left:221.2px;top:715px;width:1.5px;height:16px;background:#6b4a12;"></div>
<div class="abs" style="left:357.8px;top:715px;width:1.5px;height:16px;background:#6b4a12;"></div>
<div class="abs" style="left:360.7px;top:715px;width:1.5px;height:16px;background:#6b4a12;"></div>
<svg style="left:230px;top:716px;" width="22" height="15" viewBox="0 0 22 15"><rect x="0" y="0.5" width="15" height="14" rx="2.2" fill="#fff"/><path d="M14.5 5.5 L19.5 2 Q21 1.2 21 3 V12 Q21 13.8 19.5 13 L14.5 9.5 Z" fill="#fff"/></svg>
<div class="ct" style="left:261px;top:712px;">默认镜头</div>
<svg style="left:380px;top:716px;" width="22" height="15" viewBox="0 0 22 15"><rect x="0" y="0.5" width="15" height="14" rx="2.2" fill="#fff"/><path d="M14.5 5.5 L19.5 2 Q21 1.2 21 3 V12 Q21 13.8 19.5 13 L14.5 9.5 Z" fill="#fff"/></svg>
<div class="ct" style="left:411px;top:712px;">镜头1</div>
<svg style="left:1258px;top:716px;" width="22" height="15" viewBox="0 0 22 15"><rect x="0" y="0.5" width="15" height="14" rx="2.2" fill="#fff"/><path d="M14.5 5.5 L19.5 2 Q21 1.2 21 3 V12 Q21 13.8 19.5 13 L14.5 9.5 Z" fill="#fff"/></svg>
<div class="ct" style="left:1289px;top:712px;">镜头2</div>
<div class="clip" style="left:216.5px;top:751.7px;width:184px;background:#063f88;"></div>
<div class="clip" style="left:401px;top:751.7px;width:662px;background:#063f88;"></div>
<svg style="left:230px;top:766.4px;" width="18" height="18" viewBox="0 0 18 18"><rect x="0" y="0" width="18" height="18" rx="3" fill="#fff"/><path d="M5.9 6.1 L12.2 12.2 M12.1 4.6 L13.8 6.1 M4.3 11.7 L6 13.3" stroke="#063f88" stroke-width="2.4" stroke-linecap="round"/></svg>
<div class="ct" style="left:258px;top:764px;">背景</div>
<svg style="left:416px;top:766.4px;" width="18" height="18" viewBox="0 0 18 18"><rect x="0" y="0" width="18" height="18" rx="3" fill="#fff"/><path d="M5.9 6.1 L12.2 12.2 M12.1 4.6 L13.8 6.1 M4.3 11.7 L6 13.3" stroke="#063f88" stroke-width="2.4" stroke-linecap="round"/></svg>
<div class="ct" style="left:444px;top:764px;">背景</div>
<div class="abs" style="left:361.6px;top:760.5px;width:29.8px;height:29.6px;border-radius:4px;background:#0a3472;"></div>
<svg style="left:367.8px;top:766.4px;" width="18" height="18" viewBox="0 0 18 18"><rect x="0" y="0" width="18" height="18" rx="3" fill="#c9d2e2"/><path d="M5.9 6.1 L12.2 12.2 M12.1 4.6 L13.8 6.1 M4.3 11.7 L6 13.3" stroke="#0a3472" stroke-width="2.4" stroke-linecap="round"/></svg>
<div class="abs" style="left:1025.1px;top:760.5px;width:29.8px;height:29.6px;border-radius:4px;background:#0a3472;"></div>
<svg style="left:1031.3px;top:766.4px;" width="18" height="18" viewBox="0 0 18 18"><rect x="0" y="0" width="18" height="18" rx="3" fill="#c9d2e2"/><path d="M5.9 6.1 L12.2 12.2 M12.1 4.6 L13.8 6.1 M4.3 11.7 L6 13.3" stroke="#0a3472" stroke-width="2.4" stroke-linecap="round"/></svg>
<svg style="left:1546px;top:707px;" width="32" height="32" viewBox="-16 -16 32 32"><path d="M0 -13.6 L13.6 0 L0 13.6 L-13.6 0 Z" fill="none" stroke="#a4a8b5" stroke-width="1"/><path d="M-6 0 H6 M0 -6 V6" stroke="#cfcfd3" stroke-width="3"/></svg>
<svg style="left:1078px;top:759.5px;" width="32" height="32" viewBox="-16 -16 32 32"><path d="M0 -13.6 L13.6 0 L0 13.6 L-13.6 0 Z" fill="none" stroke="#a4a8b5" stroke-width="1"/><path d="M-6 0 H6 M0 -6 V6" stroke="#cfcfd3" stroke-width="3"/></svg>
<div class="clip" style="left:257px;top:804.3px;width:1117.3px;background:#76265f;"></div>
<svg style="left:271px;top:816.6px;" width="24" height="24" viewBox="0 0 24 24"><rect x="2.3" y="2.3" width="11" height="11.4" rx="2.4" fill="none" stroke="#fff" stroke-width="2.7"/><rect x="7.6" y="6.9" width="15.4" height="15.6" rx="3.4" fill="#fff" stroke="#76265f" stroke-width="1.6"/><path d="M12.8 11.2 L17.8 14.6 L12.8 18 Z" fill="#76265f"/></svg>
<div class="ct" style="left:303px;top:816.5px;">音效（建议不动</div>
<div class="clip" style="left:216.5px;top:856.6px;width:1314.5px;background:#7a3832;overflow:hidden;" id="aud"></div>
<svg style="left:0;top:0;" width="1766" height="1026" viewBox="0 0 1766 1026"><path d="M216.5 879.8 L216.5 878.6 L217.5 878.4 L218.5 878.4 L219.5 878.6 L220.5 878.2 L221.5 878.3 L222.5 878.5 L223.5 878.2 L224.5 878.6 L225.5 878.6 L226.5 878.5 L227.5 878.6 L228.5 878.4 L229.5 878.4 L230.5 878.3 L231.5 878.4 L232.5 878.5 L233.5 878.4 L234.5 878.4 L235.5 878.3 L236.5 878.5 L237.5 878.4 L238.5 878.2 L239.5 878.6 L240.5 878.2 L241.5 878.5 L242.5 878.4 L243.5 878.6 L244.5 878.5 L245.5 878.6 L246.5 878.2 L247.5 878.5 L248.5 878.2 L249.5 878.6 L250.5 878.4 L251.5 878.6 L252.5 878.4 L253.5 878.4 L254.5 878.6 L255.5 878.2 L256.5 878.5 L257.5 878.6 L258.5 878.6 L259.5 878.6 L260.5 878.5 L261.5 878.3 L262.5 878.5 L263.5 878.2 L264.5 878.4 L265.5 878.5 L266.5 878.6 L267.5 878.4 L268.5 878.6 L269.5 878.2 L270.5 878.5 L271.5 878.4 L272.5 878.5 L273.5 878.2 L274.5 876.8 L275.5 877.2 L276.5 876.7 L277.5 875.5 L278.5 875.2 L279.5 876.4 L280.5 876.7 L281.5 875.4 L282.5 875.8 L283.5 875.8 L284.5 875.9 L285.5 876.0 L286.5 875.8 L287.5 875.7 L288.5 877.0 L289.5 876.2 L290.5 875.8 L291.5 876.6 L292.5 875.9 L293.5 876.1 L294.5 876.4 L295.5 877.0 L296.5 876.9 L297.5 876.3 L298.5 876.4 L299.5 876.3 L300.5 877.0 L301.5 877.3 L302.5 877.1 L303.5 876.9 L304.5 876.7 L305.5 877.0 L306.5 876.7 L307.5 876.5 L308.5 876.9 L309.5 876.8 L310.5 876.8 L311.5 876.5 L312.5 876.8 L313.5 877.5 L314.5 877.5 L315.5 876.8 L316.5 877.3 L317.5 877.2 L318.5 877.2 L319.5 877.0 L320.5 877.5 L321.5 877.5 L322.5 877.4 L323.5 877.6 L324.5 877.2 L325.5 876.9 L326.5 877.7 L327.5 877.3 L328.5 877.2 L329.5 877.7 L330.5 877.3 L331.5 877.6 L332.5 877.5 L333.5 877.5 L334.5 877.5 L335.5 877.5 L336.5 877.8 L337.5 877.8 L338.5 877.9 L339.5 877.5 L340.5 877.7 L341.5 877.9 L342.5 877.4 L343.5 877.4 L344.5 877.5 L345.5 877.5 L346.5 877.3 L347.5 877.4 L348.5 877.8 L349.5 878.0 L350.5 878.0 L351.5 877.4 L352.5 877.9 L353.5 877.9 L354.5 877.0 L355.5 877.2 L356.5 875.3 L357.5 877.2 L358.5 877.5 L359.5 877.6 L360.5 877.7 L361.5 877.3 L362.5 877.2 L363.5 877.6 L364.5 877.6 L365.5 877.6 L366.5 877.4 L367.5 877.7 L368.5 877.3 L369.5 877.4 L370.5 877.7 L371.5 877.9 L372.5 877.6 L373.5 877.6 L374.5 877.8 L375.5 877.8 L376.5 877.9 L377.5 878.1 L378.5 877.8 L379.5 878.0 L380.5 877.7 L381.5 878.1 L382.5 877.9 L383.5 878.2 L384.5 878.0 L385.5 878.1 L386.5 878.0 L387.5 878.1 L388.5 878.2 L389.5 877.7 L390.5 878.2 L391.5 878.1 L392.5 877.8 L393.5 878.0 L394.5 878.1 L395.5 876.1 L396.5 878.2 L397.5 878.2 L398.5 878.0 L399.5 877.9 L400.5 878.1 L401.5 877.9 L402.5 878.2 L403.5 878.4 L404.5 877.9 L405.5 878.1 L406.5 877.9 L407.5 878.0 L408.5 878.0 L409.5 878.1 L410.5 878.0 L411.5 878.0 L412.5 878.2 L413.5 877.9 L414.5 878.2 L415.5 878.3 L416.5 878.0 L417.5 878.0 L418.5 878.4 L419.5 878.3 L420.5 878.3 L421.5 878.0 L422.5 878.2 L423.5 878.4 L424.5 878.3 L425.5 878.0 L426.5 878.4 L427.5 876.5 L428.5 876.5 L429.5 874.4 L430.5 875.2 L431.5 874.3 L432.5 874.6 L433.5 876.0 L434.5 874.7 L435.5 875.2 L436.5 876.3 L437.5 875.1 L438.5 876.6 L439.5 875.9 L440.5 876.0 L441.5 874.5 L442.5 876.1 L443.5 875.9 L444.5 876.5 L445.5 876.9 L446.5 876.4 L447.5 876.2 L448.5 877.2 L449.5 876.7 L450.5 876.6 L451.5 876.5 L452.5 877.3 L453.5 876.9 L454.5 877.4 L455.5 876.7 L456.5 877.3 L457.5 877.6 L458.5 877.1 L459.5 876.8 L460.5 877.5 L461.5 877.4 L462.5 877.5 L463.5 877.8 L464.5 877.3 L465.5 877.3 L466.5 877.2 L467.5 877.8 L468.5 877.5 L469.5 877.6 L470.5 876.9 L471.5 877.8 L472.5 877.4 L473.5 877.6 L474.5 877.5 L475.5 875.0 L476.5 877.2 L477.5 877.9 L478.5 877.1 L479.5 877.7 L480.5 877.5 L481.5 877.3 L482.5 877.7 L483.5 877.6 L484.5 877.7 L485.5 878.1 L486.5 877.6 L487.5 877.7 L488.5 877.9 L489.5 877.9 L490.5 877.7 L491.5 877.6 L492.5 877.8 L493.5 877.8 L494.5 878.1 L495.5 877.8 L496.5 877.7 L497.5 877.9 L498.5 878.0 L499.5 877.7 L500.5 878.2 L501.5 877.8 L502.5 878.0 L503.5 878.2 L504.5 878.1 L505.5 878.2 L506.5 878.3 L507.5 878.0 L508.5 878.3 L509.5 878.2 L510.5 878.0 L511.5 878.2 L512.5 878.3 L513.5 878.1 L514.5 877.9 L515.5 878.2 L516.5 877.9 L517.5 878.1 L518.5 878.0 L519.5 878.2 L520.5 878.4 L521.5 878.1 L522.5 878.2 L523.5 878.4 L524.5 878.0 L525.5 878.1 L526.5 878.4 L527.5 878.2 L528.5 878.2 L529.5 878.1 L530.5 878.4 L531.5 878.1 L532.5 878.3 L533.5 878.5 L534.5 878.0 L535.5 878.1 L536.5 878.4 L537.5 878.2 L538.5 878.2 L539.5 878.3 L540.5 878.3 L541.5 878.2 L542.5 878.5 L543.5 878.0 L544.5 877.9 L545.5 877.3 L546.5 876.7 L547.5 877.4 L548.5 876.9 L549.5 876.6 L550.5 877.1 L551.5 876.6 L552.5 876.8 L553.5 877.2 L554.5 877.1 L555.5 877.5 L556.5 877.6 L557.5 877.7 L558.5 877.3 L559.5 877.3 L560.5 877.6 L561.5 877.3 L562.5 877.2 L563.5 877.1 L564.5 877.4 L565.5 877.5 L566.5 877.7 L567.5 877.6 L568.5 877.2 L569.5 876.0 L570.5 877.7 L571.5 877.4 L572.5 877.6 L573.5 877.9 L574.5 877.8 L575.5 877.8 L576.5 877.9 L577.5 878.0 L578.5 877.4 L579.5 875.4 L580.5 877.4 L581.5 877.1 L582.5 876.4 L583.5 876.3 L584.5 876.7 L585.5 876.1 L586.5 876.7 L587.5 876.2 L588.5 876.9 L589.5 876.1 L590.5 877.0 L591.5 876.6 L592.5 877.2 L593.5 877.3 L594.5 876.5 L595.5 877.0 L596.5 876.6 L597.5 876.6 L598.5 876.9 L599.5 877.1 L600.5 876.9 L601.5 877.3 L602.5 876.9 L603.5 876.8 L604.5 876.8 L605.5 877.0 L606.5 877.4 L607.5 877.2 L608.5 877.3 L609.5 877.8 L610.5 877.1 L611.5 877.4 L612.5 877.3 L613.5 877.4 L614.5 877.0 L615.5 877.8 L616.5 876.0 L617.5 876.1 L618.5 875.8 L619.5 875.5 L620.5 876.0 L621.5 874.6 L622.5 874.1 L623.5 875.1 L624.5 875.2 L625.5 874.9 L626.5 874.9 L627.5 876.2 L628.5 872.5 L629.5 875.4 L630.5 875.7 L631.5 875.8 L632.5 876.1 L633.5 876.3 L634.5 875.3 L635.5 875.8 L636.5 875.9 L637.5 875.7 L638.5 875.0 L639.5 875.5 L640.5 876.2 L641.5 875.8 L642.5 876.6 L643.5 876.0 L644.5 876.3 L645.5 876.8 L646.5 876.9 L647.5 876.1 L648.5 877.0 L649.5 876.7 L650.5 876.7 L651.5 876.8 L652.5 876.5 L653.5 876.5 L654.5 876.8 L655.5 877.1 L656.5 876.5 L657.5 876.8 L658.5 876.8 L659.5 876.6 L660.5 876.8 L661.5 876.6 L662.5 876.7 L663.5 877.0 L664.5 877.2 L665.5 876.8 L666.5 877.4 L667.5 877.1 L668.5 877.0 L669.5 877.1 L670.5 877.2 L671.5 877.3 L672.5 877.5 L673.5 877.2 L674.5 877.1 L675.5 877.2 L676.5 877.3 L677.5 877.4 L678.5 877.8 L679.5 877.8 L680.5 877.4 L681.5 877.5 L682.5 877.6 L683.5 877.7 L684.5 877.3 L685.5 877.6 L686.5 877.4 L687.5 877.3 L688.5 877.7 L689.5 877.5 L690.5 877.2 L691.5 874.6 L692.5 877.3 L693.5 877.2 L694.5 877.1 L695.5 877.2 L696.5 876.9 L697.5 877.1 L698.5 877.4 L699.5 877.8 L700.5 877.5 L701.5 877.5 L702.5 877.5 L703.5 877.4 L704.5 877.4 L705.5 877.6 L706.5 877.6 L707.5 878.0 L708.5 878.0 L709.5 877.9 L710.5 874.9 L711.5 877.8 L712.5 877.9 L713.5 878.0 L714.5 878.1 L715.5 877.7 L716.5 877.9 L717.5 878.1 L718.5 878.1 L719.5 878.1 L720.5 878.1 L721.5 878.0 L722.5 877.9 L723.5 878.2 L724.5 877.9 L725.5 878.2 L726.5 878.0 L727.5 878.0 L728.5 878.3 L729.5 878.3 L730.5 878.0 L731.5 878.0 L732.5 875.4 L733.5 875.5 L734.5 873.1 L735.5 874.5 L736.5 872.3 L737.5 872.8 L738.5 874.7 L739.5 874.7 L740.5 873.6 L741.5 875.8 L742.5 874.3 L743.5 875.9 L744.5 873.9 L745.5 875.5 L746.5 876.0 L747.5 876.2 L748.5 875.0 L749.5 876.5 L750.5 876.1 L751.5 876.5 L752.5 875.5 L753.5 875.9 L754.5 875.9 L755.5 876.3 L756.5 876.1 L757.5 876.6 L758.5 876.3 L759.5 876.8 L760.5 876.4 L761.5 876.5 L762.5 876.6 L763.5 875.9 L764.5 877.0 L765.5 876.2 L766.5 876.2 L767.5 876.6 L768.5 876.3 L769.5 876.4 L770.5 877.2 L771.5 876.8 L772.5 876.6 L773.5 876.3 L774.5 876.8 L775.5 876.5 L776.5 877.2 L777.5 877.0 L778.5 877.1 L779.5 877.1 L780.5 876.6 L781.5 877.2 L782.5 877.2 L783.5 876.7 L784.5 877.1 L785.5 877.2 L786.5 877.1 L787.5 877.6 L788.5 877.4 L789.5 877.1 L790.5 877.3 L791.5 877.3 L792.5 877.2 L793.5 877.1 L794.5 876.9 L795.5 877.3 L796.5 877.3 L797.5 875.3 L798.5 875.2 L799.5 876.3 L800.5 876.3 L801.5 876.6 L802.5 877.3 L803.5 876.8 L804.5 877.8 L805.5 877.0 L806.5 877.6 L807.5 877.2 L808.5 877.6 L809.5 877.5 L810.5 877.6 L811.5 877.9 L812.5 877.9 L813.5 877.7 L814.5 878.0 L815.5 877.5 L816.5 877.6 L817.5 877.6 L818.5 877.6 L819.5 877.5 L820.5 878.0 L821.5 877.6 L822.5 877.7 L823.5 878.0 L824.5 877.9 L825.5 877.6 L826.5 877.8 L827.5 877.8 L828.5 878.0 L829.5 877.6 L830.5 877.8 L831.5 877.9 L832.5 877.6 L833.5 877.8 L834.5 877.8 L835.5 878.0 L836.5 877.9 L837.5 877.8 L838.5 878.2 L839.5 877.8 L840.5 877.9 L841.5 877.7 L842.5 877.9 L843.5 878.1 L844.5 877.8 L845.5 878.2 L846.5 877.7 L847.5 877.9 L848.5 878.1 L849.5 878.1 L850.5 878.1 L851.5 877.7 L852.5 878.0 L853.5 877.9 L854.5 878.0 L855.5 878.2 L856.5 878.2 L857.5 877.9 L858.5 878.0 L859.5 878.1 L860.5 877.9 L861.5 877.8 L862.5 878.1 L863.5 878.3 L864.5 878.1 L865.5 878.1 L866.5 878.0 L867.5 878.1 L868.5 878.1 L869.5 878.1 L870.5 877.0 L871.5 876.4 L872.5 875.3 L873.5 875.3 L874.5 876.5 L875.5 877.0 L876.5 877.4 L877.5 876.9 L878.5 877.3 L879.5 877.8 L880.5 877.8 L881.5 877.7 L882.5 878.1 L883.5 878.1 L884.5 878.3 L885.5 875.0 L886.5 875.7 L887.5 874.4 L888.5 873.6 L889.5 874.6 L890.5 873.2 L891.5 874.4 L892.5 873.7 L893.5 874.6 L894.5 874.2 L895.5 875.5 L896.5 875.0 L897.5 874.8 L898.5 874.3 L899.5 874.1 L900.5 875.2 L901.5 876.0 L902.5 874.9 L903.5 875.5 L904.5 874.6 L905.5 874.9 L906.5 875.5 L907.5 875.2 L908.5 876.4 L909.5 875.6 L910.5 875.9 L911.5 875.9 L912.5 876.0 L913.5 876.3 L914.5 876.3 L915.5 876.3 L916.5 876.8 L917.5 876.6 L918.5 876.5 L919.5 876.2 L920.5 876.4 L921.5 876.6 L922.5 876.5 L923.5 876.8 L924.5 877.0 L925.5 876.8 L926.5 877.1 L927.5 877.0 L928.5 876.5 L929.5 877.1 L930.5 877.2 L931.5 877.5 L932.5 877.0 L933.5 876.9 L934.5 876.8 L935.5 877.6 L936.5 877.5 L937.5 877.3 L938.5 877.1 L939.5 877.4 L940.5 877.6 L941.5 877.3 L942.5 877.7 L943.5 877.6 L944.5 877.3 L945.5 878.0 L946.5 878.0 L947.5 877.5 L948.5 877.8 L949.5 877.7 L950.5 878.0 L951.5 877.7 L952.5 877.9 L953.5 877.8 L954.5 877.7 L955.5 878.2 L956.5 877.1 L957.5 877.1 L958.5 875.6 L959.5 876.8 L960.5 877.1 L961.5 876.8 L962.5 877.4 L963.5 877.0 L964.5 877.6 L965.5 877.3 L966.5 876.9 L967.5 877.4 L968.5 877.4 L969.5 877.3 L970.5 877.1 L971.5 877.0 L972.5 877.5 L973.5 877.1 L974.5 876.9 L975.5 877.5 L976.5 877.2 L977.5 877.5 L978.5 877.3 L979.5 877.3 L980.5 877.3 L981.5 877.5 L982.5 877.8 L983.5 877.5 L984.5 877.5 L985.5 877.8 L986.5 877.8 L987.5 877.7 L988.5 877.2 L989.5 877.8 L990.5 877.4 L991.5 877.5 L992.5 877.5 L993.5 877.7 L994.5 877.3 L995.5 878.1 L996.5 877.9 L997.5 878.0 L998.5 877.6 L999.5 877.7 L1000.5 875.0 L1001.5 877.7 L1002.5 877.6 L1003.5 878.0 L1004.5 877.7 L1005.5 877.8 L1006.5 877.5 L1007.5 877.7 L1008.5 877.6 L1009.5 877.7 L1010.5 877.9 L1011.5 877.6 L1012.5 878.0 L1013.5 877.9 L1014.5 877.7 L1015.5 878.2 L1016.5 878.1 L1017.5 877.9 L1018.5 878.1 L1019.5 877.7 L1020.5 877.8 L1021.5 878.0 L1022.5 877.8 L1023.5 877.9 L1024.5 877.7 L1025.5 878.1 L1026.5 878.2 L1027.5 878.0 L1028.5 878.1 L1029.5 875.3 L1030.5 878.2 L1031.5 877.9 L1032.5 878.1 L1033.5 878.3 L1034.5 876.4 L1035.5 876.6 L1036.5 875.9 L1037.5 874.4 L1038.5 874.6 L1039.5 875.6 L1040.5 874.8 L1041.5 874.7 L1042.5 875.2 L1043.5 876.0 L1044.5 875.0 L1045.5 874.5 L1046.5 875.6 L1047.5 875.6 L1048.5 876.1 L1049.5 876.5 L1050.5 873.3 L1051.5 875.0 L1052.5 876.0 L1053.5 876.0 L1054.5 875.4 L1055.5 876.5 L1056.5 875.9 L1057.5 876.6 L1058.5 875.1 L1059.5 875.2 L1060.5 875.9 L1061.5 876.1 L1062.5 875.6 L1063.5 876.5 L1064.5 877.0 L1065.5 876.5 L1066.5 876.4 L1067.5 876.3 L1068.5 877.0 L1069.5 876.5 L1070.5 876.9 L1071.5 876.8 L1072.5 876.8 L1073.5 876.5 L1074.5 876.9 L1075.5 876.2 L1076.5 876.6 L1077.5 876.6 L1078.5 877.0 L1079.5 876.5 L1080.5 876.7 L1081.5 877.1 L1082.5 877.2 L1083.5 876.7 L1084.5 876.5 L1085.5 876.7 L1086.5 876.9 L1087.5 876.8 L1088.5 876.5 L1089.5 877.3 L1090.5 876.2 L1091.5 875.9 L1092.5 876.9 L1093.5 876.7 L1094.5 876.9 L1095.5 876.7 L1096.5 877.0 L1097.5 876.6 L1098.5 876.6 L1099.5 877.1 L1100.5 876.8 L1101.5 876.5 L1102.5 877.1 L1103.5 876.9 L1104.5 877.4 L1105.5 876.7 L1106.5 877.4 L1107.5 877.1 L1108.5 877.5 L1109.5 877.5 L1110.5 877.7 L1111.5 877.5 L1112.5 877.4 L1113.5 876.7 L1114.5 877.1 L1115.5 877.1 L1116.5 877.6 L1117.5 876.9 L1118.5 877.4 L1119.5 877.4 L1120.5 877.5 L1121.5 877.7 L1122.5 877.6 L1123.5 877.7 L1124.5 877.6 L1125.5 877.6 L1126.5 878.0 L1127.5 877.6 L1128.5 877.5 L1129.5 877.8 L1130.5 877.4 L1131.5 877.6 L1132.5 877.9 L1133.5 877.9 L1134.5 878.0 L1135.5 877.9 L1136.5 877.5 L1137.5 876.9 L1138.5 876.9 L1139.5 874.9 L1140.5 876.4 L1141.5 876.1 L1142.5 876.8 L1143.5 877.1 L1144.5 877.6 L1145.5 877.5 L1146.5 877.8 L1147.5 877.8 L1148.5 877.9 L1149.5 877.9 L1150.5 878.2 L1151.5 877.9 L1152.5 877.8 L1153.5 877.8 L1154.5 878.0 L1155.5 877.7 L1156.5 877.6 L1157.5 878.0 L1158.5 878.3 L1159.5 877.8 L1160.5 878.0 L1161.5 878.3 L1162.5 878.1 L1163.5 877.8 L1164.5 878.2 L1165.5 878.1 L1166.5 878.1 L1167.5 877.9 L1168.5 878.0 L1169.5 878.1 L1170.5 878.1 L1171.5 878.2 L1172.5 877.9 L1173.5 877.2 L1174.5 877.4 L1175.5 876.4 L1176.5 876.5 L1177.5 877.0 L1178.5 877.0 L1179.5 877.3 L1180.5 877.4 L1181.5 877.6 L1182.5 877.6 L1183.5 877.9 L1184.5 878.1 L1185.5 878.1 L1186.5 875.1 L1187.5 878.1 L1188.5 878.1 L1189.5 877.9 L1190.5 877.8 L1191.5 878.0 L1192.5 876.7 L1193.5 876.4 L1194.5 872.6 L1195.5 875.0 L1196.5 874.5 L1197.5 875.0 L1198.5 875.4 L1199.5 873.7 L1200.5 873.4 L1201.5 875.4 L1202.5 876.0 L1203.5 875.2 L1204.5 876.0 L1205.5 875.1 L1206.5 874.3 L1207.5 875.7 L1208.5 874.8 L1209.5 875.9 L1210.5 876.4 L1211.5 876.1 L1212.5 876.4 L1213.5 875.3 L1214.5 876.6 L1215.5 875.9 L1216.5 875.9 L1217.5 875.8 L1218.5 875.9 L1219.5 876.2 L1220.5 876.6 L1221.5 876.4 L1222.5 876.7 L1223.5 876.7 L1224.5 876.5 L1225.5 877.2 L1226.5 876.8 L1227.5 875.6 L1228.5 875.4 L1229.5 872.9 L1230.5 875.9 L1231.5 875.4 L1232.5 876.8 L1233.5 876.5 L1234.5 877.5 L1235.5 877.1 L1236.5 876.9 L1237.5 877.3 L1238.5 877.6 L1239.5 877.7 L1240.5 877.6 L1241.5 877.4 L1242.5 877.4 L1243.5 877.3 L1244.5 877.4 L1245.5 877.9 L1246.5 877.5 L1247.5 877.6 L1248.5 877.8 L1249.5 877.6 L1250.5 877.7 L1251.5 878.0 L1252.5 877.8 L1253.5 877.5 L1254.5 877.8 L1255.5 877.7 L1256.5 877.7 L1257.5 877.7 L1258.5 877.8 L1259.5 877.8 L1260.5 878.0 L1261.5 877.9 L1262.5 877.9 L1263.5 878.0 L1264.5 878.2 L1265.5 877.9 L1266.5 877.7 L1267.5 875.0 L1268.5 877.8 L1269.5 877.6 L1270.5 876.9 L1271.5 876.9 L1272.5 876.8 L1273.5 877.4 L1274.5 877.1 L1275.5 877.1 L1276.5 876.9 L1277.5 877.4 L1278.5 877.3 L1279.5 877.3 L1280.5 877.2 L1281.5 877.2 L1282.5 877.7 L1283.5 877.6 L1284.5 877.6 L1285.5 877.4 L1286.5 877.4 L1287.5 877.6 L1288.5 877.6 L1289.5 877.7 L1290.5 877.7 L1291.5 877.5 L1292.5 877.8 L1293.5 877.8 L1294.5 877.9 L1295.5 877.7 L1296.5 877.9 L1297.5 877.8 L1298.5 877.9 L1299.5 878.1 L1300.5 877.9 L1301.5 877.9 L1302.5 877.6 L1303.5 878.1 L1304.5 876.6 L1305.5 877.2 L1306.5 875.4 L1307.5 876.7 L1308.5 876.3 L1309.5 877.2 L1310.5 877.0 L1311.5 877.7 L1312.5 877.6 L1313.5 877.7 L1314.5 878.0 L1315.5 877.8 L1316.5 878.1 L1317.5 878.2 L1318.5 878.2 L1319.5 878.4 L1320.5 878.0 L1321.5 878.4 L1322.5 878.4 L1323.5 878.4 L1324.5 878.2 L1325.5 878.4 L1326.5 878.5 L1327.5 878.2 L1328.5 878.1 L1329.5 878.2 L1330.5 878.2 L1331.5 878.5 L1332.5 878.4 L1333.5 878.3 L1334.5 878.1 L1335.5 878.4 L1336.5 878.5 L1337.5 878.1 L1338.5 878.3 L1339.5 878.1 L1340.5 878.5 L1341.5 878.2 L1342.5 878.5 L1343.5 878.4 L1344.5 878.2 L1345.5 878.2 L1346.5 878.2 L1347.5 875.7 L1348.5 876.5 L1349.5 874.5 L1350.5 873.5 L1351.5 872.8 L1352.5 873.2 L1353.5 874.3 L1354.5 873.7 L1355.5 874.2 L1356.5 873.5 L1357.5 874.2 L1358.5 875.1 L1359.5 874.0 L1360.5 875.1 L1361.5 874.6 L1362.5 875.6 L1363.5 874.8 L1364.5 872.5 L1365.5 876.5 L1366.5 875.7 L1367.5 876.1 L1368.5 875.1 L1369.5 876.5 L1370.5 875.9 L1371.5 876.4 L1372.5 875.7 L1373.5 875.5 L1374.5 875.6 L1375.5 876.4 L1376.5 876.0 L1377.5 876.1 L1378.5 877.1 L1379.5 876.4 L1380.5 876.9 L1381.5 876.2 L1382.5 876.0 L1383.5 877.0 L1384.5 876.3 L1385.5 876.7 L1386.5 876.4 L1387.5 876.7 L1388.5 876.5 L1389.5 876.9 L1390.5 876.7 L1391.5 877.3 L1392.5 876.9 L1393.5 877.3 L1394.5 876.9 L1395.5 877.1 L1396.5 877.0 L1397.5 876.9 L1398.5 876.9 L1399.5 877.6 L1400.5 877.0 L1401.5 877.6 L1402.5 877.5 L1403.5 877.2 L1404.5 876.7 L1405.5 876.2 L1406.5 876.5 L1407.5 876.9 L1408.5 876.6 L1409.5 877.0 L1410.5 876.8 L1411.5 877.6 L1412.5 877.5 L1413.5 877.7 L1414.5 877.5 L1415.5 877.8 L1416.5 877.7 L1417.5 877.6 L1418.5 878.1 L1419.5 877.6 L1420.5 877.9 L1421.5 877.5 L1422.5 877.6 L1423.5 877.6 L1424.5 877.7 L1425.5 877.8 L1426.5 877.8 L1427.5 878.1 L1428.5 877.9 L1429.5 877.8 L1430.5 878.0 L1431.5 877.7 L1432.5 877.8 L1433.5 877.7 L1434.5 877.8 L1435.5 878.0 L1436.5 878.1 L1437.5 877.8 L1438.5 878.2 L1439.5 877.8 L1440.5 878.0 L1441.5 875.6 L1442.5 877.3 L1443.5 876.9 L1444.5 876.1 L1445.5 876.3 L1446.5 876.5 L1447.5 876.5 L1448.5 876.7 L1449.5 877.2 L1450.5 877.6 L1451.5 877.4 L1452.5 877.6 L1453.5 877.4 L1454.5 877.8 L1455.5 878.1 L1456.5 877.9 L1457.5 878.2 L1458.5 878.2 L1459.5 878.1 L1460.5 878.1 L1461.5 878.2 L1462.5 878.0 L1463.5 878.1 L1464.5 878.4 L1465.5 878.1 L1466.5 878.3 L1467.5 878.0 L1468.5 878.4 L1469.5 878.1 L1470.5 878.5 L1471.5 878.3 L1472.5 878.1 L1473.5 878.4 L1474.5 878.3 L1475.5 878.5 L1476.5 878.0 L1477.5 878.2 L1478.5 878.1 L1479.5 877.4 L1480.5 877.2 L1481.5 875.1 L1482.5 875.4 L1483.5 876.5 L1484.5 876.6 L1485.5 877.0 L1486.5 877.4 L1487.5 877.6 L1488.5 877.3 L1489.5 877.7 L1490.5 877.8 L1491.5 877.9 L1492.5 877.9 L1493.5 877.9 L1494.5 877.9 L1495.5 878.0 L1496.5 878.0 L1497.5 878.0 L1498.5 878.5 L1499.5 878.4 L1500.5 878.2 L1501.5 878.5 L1502.5 875.9 L1503.5 875.9 L1504.5 874.7 L1505.5 873.1 L1506.5 875.2 L1507.5 873.6 L1508.5 874.2 L1509.5 875.6 L1510.5 875.3 L1511.5 875.7 L1512.5 875.4 L1513.5 875.8 L1514.5 874.5 L1515.5 876.0 L1516.5 875.2 L1517.5 875.9 L1518.5 875.4 L1519.5 876.8 L1520.5 875.7 L1521.5 876.2 L1522.5 875.8 L1523.5 875.7 L1524.5 876.3 L1525.5 876.1 L1526.5 876.6 L1527.5 876.5 L1528.5 876.9 L1529.5 876.5 L1530.5 876.3 L1530.5 884.2 L1529.5 883.5 L1528.5 882.4 L1527.5 882.7 L1526.5 882.8 L1525.5 882.6 L1524.5 882.8 L1523.5 884.7 L1522.5 884.7 L1521.5 883.1 L1520.5 884.5 L1519.5 883.2 L1518.5 885.1 L1517.5 884.3 L1516.5 884.5 L1515.5 882.8 L1514.5 886.0 L1513.5 883.4 L1512.5 884.5 L1511.5 883.6 L1510.5 884.4 L1509.5 885.0 L1508.5 884.5 L1507.5 886.1 L1506.5 884.7 L1505.5 886.6 L1504.5 886.0 L1503.5 883.5 L1502.5 884.5 L1501.5 881.2 L1500.5 881.8 L1499.5 880.9 L1498.5 880.9 L1497.5 881.4 L1496.5 881.9 L1495.5 881.2 L1494.5 881.5 L1493.5 881.9 L1492.5 882.2 L1491.5 881.4 L1490.5 881.7 L1489.5 882.1 L1488.5 882.5 L1487.5 882.3 L1486.5 882.5 L1485.5 882.3 L1484.5 882.6 L1483.5 882.3 L1482.5 884.6 L1481.5 883.8 L1480.5 882.1 L1479.5 882.7 L1478.5 881.6 L1477.5 881.5 L1476.5 881.7 L1475.5 881.1 L1474.5 881.5 L1473.5 881.0 L1472.5 881.1 L1471.5 881.0 L1470.5 880.8 L1469.5 881.4 L1468.5 880.9 L1467.5 881.3 L1466.5 881.3 L1465.5 881.9 L1464.5 881.3 L1463.5 881.3 L1462.5 881.8 L1461.5 881.1 L1460.5 881.1 L1459.5 881.3 L1458.5 881.3 L1457.5 881.6 L1456.5 881.6 L1455.5 881.7 L1454.5 881.4 L1453.5 882.7 L1452.5 881.8 L1451.5 882.7 L1450.5 881.5 L1449.5 882.8 L1448.5 882.5 L1447.5 883.7 L1446.5 883.6 L1445.5 883.6 L1444.5 883.0 L1443.5 882.0 L1442.5 881.9 L1441.5 884.8 L1440.5 881.3 L1439.5 882.0 L1438.5 881.4 L1437.5 881.9 L1436.5 881.2 L1435.5 881.3 L1434.5 881.4 L1433.5 882.4 L1432.5 881.7 L1431.5 882.0 L1430.5 881.6 L1429.5 881.5 L1428.5 881.3 L1427.5 881.1 L1426.5 882.2 L1425.5 881.4 L1424.5 882.3 L1423.5 881.9 L1422.5 882.2 L1421.5 881.7 L1420.5 882.0 L1419.5 881.7 L1418.5 881.4 L1417.5 882.0 L1416.5 881.5 L1415.5 881.6 L1414.5 882.4 L1413.5 881.7 L1412.5 882.0 L1411.5 882.2 L1410.5 882.3 L1409.5 882.2 L1408.5 882.6 L1407.5 882.5 L1406.5 882.9 L1405.5 883.7 L1404.5 882.8 L1403.5 882.8 L1402.5 881.6 L1401.5 882.2 L1400.5 883.1 L1399.5 881.7 L1398.5 882.0 L1397.5 882.6 L1396.5 882.0 L1395.5 882.5 L1394.5 883.0 L1393.5 881.8 L1392.5 882.1 L1391.5 882.2 L1390.5 882.4 L1389.5 882.3 L1388.5 883.0 L1387.5 882.3 L1386.5 882.4 L1385.5 882.7 L1384.5 883.2 L1383.5 883.2 L1382.5 883.7 L1381.5 882.7 L1380.5 882.3 L1379.5 883.7 L1378.5 882.5 L1377.5 884.2 L1376.5 884.4 L1375.5 883.9 L1374.5 883.2 L1373.5 885.0 L1372.5 883.9 L1371.5 882.8 L1370.5 883.1 L1369.5 883.6 L1368.5 883.8 L1367.5 882.8 L1366.5 883.5 L1365.5 883.8 L1364.5 887.0 L1363.5 885.4 L1362.5 883.1 L1361.5 884.9 L1360.5 884.1 L1359.5 884.7 L1358.5 884.9 L1357.5 885.0 L1356.5 884.9 L1355.5 886.7 L1354.5 885.9 L1353.5 884.4 L1352.5 884.8 L1351.5 887.4 L1350.5 886.2 L1349.5 883.9 L1348.5 883.0 L1347.5 884.4 L1346.5 881.4 L1345.5 881.2 L1344.5 881.4 L1343.5 881.3 L1342.5 881.2 L1341.5 881.1 L1340.5 881.3 L1339.5 881.9 L1338.5 881.5 L1337.5 881.8 L1336.5 881.0 L1335.5 881.4 L1334.5 881.2 L1333.5 881.1 L1332.5 881.3 L1331.5 881.3 L1330.5 881.1 L1329.5 881.2 L1328.5 881.1 L1327.5 881.3 L1326.5 880.9 L1325.5 881.0 L1324.5 881.6 L1323.5 881.3 L1322.5 881.6 L1321.5 881.2 L1320.5 881.7 L1319.5 880.9 L1318.5 881.7 L1317.5 881.1 L1316.5 881.5 L1315.5 881.8 L1314.5 882.0 L1313.5 881.9 L1312.5 882.6 L1311.5 882.0 L1310.5 882.2 L1309.5 882.8 L1308.5 882.8 L1307.5 883.7 L1306.5 884.1 L1305.5 882.0 L1304.5 883.7 L1303.5 881.4 L1302.5 881.9 L1301.5 881.6 L1300.5 881.8 L1299.5 881.1 L1298.5 881.6 L1297.5 881.5 L1296.5 882.0 L1295.5 881.3 L1294.5 881.8 L1293.5 881.6 L1292.5 881.7 L1291.5 882.2 L1290.5 882.2 L1289.5 881.5 L1288.5 881.7 L1287.5 881.6 L1286.5 882.7 L1285.5 881.8 L1284.5 881.6 L1283.5 882.1 L1282.5 881.9 L1281.5 882.9 L1280.5 881.9 L1279.5 882.0 L1278.5 881.8 L1277.5 882.3 L1276.5 882.6 L1275.5 882.4 L1274.5 883.0 L1273.5 882.4 L1272.5 883.3 L1271.5 883.3 L1270.5 882.4 L1269.5 882.5 L1268.5 881.7 L1267.5 883.5 L1266.5 882.3 L1265.5 881.3 L1264.5 881.0 L1263.5 881.4 L1262.5 881.5 L1261.5 882.2 L1260.5 881.9 L1259.5 881.7 L1258.5 881.8 L1257.5 882.3 L1256.5 882.2 L1255.5 882.0 L1254.5 881.8 L1253.5 881.7 L1252.5 881.6 L1251.5 881.7 L1250.5 882.0 L1249.5 882.3 L1248.5 882.2 L1247.5 882.5 L1246.5 881.7 L1245.5 881.3 L1244.5 882.6 L1243.5 882.4 L1242.5 881.8 L1241.5 882.4 L1240.5 881.7 L1239.5 881.6 L1238.5 881.9 L1237.5 882.4 L1236.5 882.9 L1235.5 881.9 L1234.5 882.4 L1233.5 883.3 L1232.5 882.8 L1231.5 884.6 L1230.5 884.3 L1229.5 885.0 L1228.5 884.1 L1227.5 884.4 L1226.5 883.1 L1225.5 882.6 L1224.5 882.6 L1223.5 883.6 L1222.5 883.3 L1221.5 882.7 L1220.5 882.9 L1219.5 884.2 L1218.5 883.1 L1217.5 883.6 L1216.5 884.7 L1215.5 884.5 L1214.5 882.6 L1213.5 884.8 L1212.5 882.9 L1211.5 883.8 L1210.5 883.6 L1209.5 882.9 L1208.5 884.1 L1207.5 883.3 L1206.5 884.7 L1205.5 883.4 L1204.5 882.9 L1203.5 884.2 L1202.5 883.4 L1201.5 883.3 L1200.5 886.4 L1199.5 887.3 L1198.5 884.4 L1197.5 884.3 L1196.5 885.7 L1195.5 884.5 L1194.5 885.8 L1193.5 883.2 L1192.5 882.2 L1191.5 881.7 L1190.5 881.4 L1189.5 881.5 L1188.5 881.9 L1187.5 881.8 L1186.5 885.3 L1185.5 881.6 L1184.5 881.6 L1183.5 881.9 L1182.5 882.5 L1181.5 881.7 L1180.5 882.5 L1179.5 882.0 L1178.5 882.2 L1177.5 883.0 L1176.5 883.2 L1175.5 883.8 L1174.5 882.7 L1173.5 882.5 L1172.5 881.5 L1171.5 881.0 L1170.5 881.6 L1169.5 881.7 L1168.5 881.4 L1167.5 881.3 L1166.5 881.1 L1165.5 881.2 L1164.5 881.5 L1163.5 881.3 L1162.5 881.3 L1161.5 881.1 L1160.5 881.8 L1159.5 882.3 L1158.5 880.9 L1157.5 881.3 L1156.5 882.5 L1155.5 882.4 L1154.5 881.3 L1153.5 881.6 L1152.5 881.8 L1151.5 881.6 L1150.5 881.4 L1149.5 881.7 L1148.5 881.4 L1147.5 881.4 L1146.5 881.4 L1145.5 881.7 L1144.5 881.5 L1143.5 882.7 L1142.5 883.1 L1141.5 883.1 L1140.5 883.7 L1139.5 885.3 L1138.5 882.5 L1137.5 882.6 L1136.5 881.7 L1135.5 882.1 L1134.5 881.7 L1133.5 881.3 L1132.5 881.4 L1131.5 882.2 L1130.5 882.1 L1129.5 882.0 L1128.5 881.8 L1127.5 882.3 L1126.5 881.9 L1125.5 881.6 L1124.5 882.1 L1123.5 881.5 L1122.5 882.2 L1121.5 882.3 L1120.5 882.5 L1119.5 881.9 L1118.5 881.7 L1117.5 882.9 L1116.5 882.1 L1115.5 882.0 L1114.5 882.1 L1113.5 883.0 L1112.5 881.7 L1111.5 882.3 L1110.5 881.6 L1109.5 881.8 L1108.5 882.1 L1107.5 882.5 L1106.5 882.5 L1105.5 882.2 L1104.5 882.4 L1103.5 882.3 L1102.5 882.2 L1101.5 883.3 L1100.5 883.1 L1099.5 882.6 L1098.5 883.7 L1097.5 882.5 L1096.5 882.4 L1095.5 883.2 L1094.5 882.4 L1093.5 882.4 L1092.5 882.3 L1091.5 884.2 L1090.5 884.0 L1089.5 882.6 L1088.5 883.8 L1087.5 883.2 L1086.5 882.4 L1085.5 882.6 L1084.5 883.5 L1083.5 882.2 L1082.5 882.6 L1081.5 881.9 L1080.5 882.2 L1079.5 883.1 L1078.5 882.1 L1077.5 883.7 L1076.5 883.7 L1075.5 883.3 L1074.5 882.3 L1073.5 882.5 L1072.5 882.8 L1071.5 882.9 L1070.5 882.5 L1069.5 883.4 L1068.5 882.7 L1067.5 883.8 L1066.5 882.5 L1065.5 882.4 L1064.5 882.5 L1063.5 883.0 L1062.5 883.5 L1061.5 883.8 L1060.5 883.2 L1059.5 884.0 L1058.5 884.4 L1057.5 883.3 L1056.5 884.2 L1055.5 882.9 L1054.5 884.1 L1053.5 884.4 L1052.5 884.4 L1051.5 884.9 L1050.5 885.0 L1049.5 883.0 L1048.5 883.7 L1047.5 883.5 L1046.5 883.0 L1045.5 886.4 L1044.5 885.6 L1043.5 882.9 L1042.5 884.3 L1041.5 885.2 L1040.5 884.3 L1039.5 883.1 L1038.5 885.6 L1037.5 885.9 L1036.5 883.6 L1035.5 882.3 L1034.5 883.0 L1033.5 881.0 L1032.5 881.9 L1031.5 881.3 L1030.5 881.3 L1029.5 884.9 L1028.5 881.2 L1027.5 881.3 L1026.5 881.1 L1025.5 881.2 L1024.5 881.9 L1023.5 882.0 L1022.5 881.5 L1021.5 881.3 L1020.5 882.1 L1019.5 881.8 L1018.5 881.3 L1017.5 881.3 L1016.5 881.3 L1015.5 881.8 L1014.5 881.5 L1013.5 881.5 L1012.5 881.8 L1011.5 882.4 L1010.5 882.1 L1009.5 881.9 L1008.5 882.5 L1007.5 882.0 L1006.5 881.8 L1005.5 881.7 L1004.5 882.2 L1003.5 881.8 L1002.5 881.6 L1001.5 881.6 L1000.5 885.7 L999.5 881.5 L998.5 882.3 L997.5 881.5 L996.5 881.5 L995.5 881.3 L994.5 882.2 L993.5 882.4 L992.5 881.7 L991.5 882.5 L990.5 882.0 L989.5 881.4 L988.5 882.7 L987.5 881.8 L986.5 881.5 L985.5 881.7 L984.5 882.5 L983.5 882.6 L982.5 881.9 L981.5 881.6 L980.5 882.7 L979.5 882.4 L978.5 882.8 L977.5 882.6 L976.5 882.1 L975.5 882.5 L974.5 883.1 L973.5 882.2 L972.5 881.9 L971.5 882.4 L970.5 882.3 L969.5 882.2 L968.5 881.8 L967.5 881.9 L966.5 883.3 L965.5 882.2 L964.5 882.2 L963.5 883.1 L962.5 882.5 L961.5 882.4 L960.5 883.1 L959.5 883.2 L958.5 885.0 L957.5 882.8 L956.5 882.9 L955.5 881.7 L954.5 881.6 L953.5 882.0 L952.5 881.6 L951.5 882.2 L950.5 881.3 L949.5 881.9 L948.5 881.6 L947.5 882.5 L946.5 881.4 L945.5 881.9 L944.5 882.7 L943.5 882.4 L942.5 881.5 L941.5 882.8 L940.5 882.2 L939.5 882.5 L938.5 882.7 L937.5 881.8 L936.5 882.5 L935.5 882.0 L934.5 882.8 L933.5 882.5 L932.5 883.0 L931.5 882.4 L930.5 882.8 L929.5 882.1 L928.5 882.8 L927.5 882.2 L926.5 881.9 L925.5 882.5 L924.5 881.9 L923.5 883.3 L922.5 882.7 L921.5 882.3 L920.5 882.4 L919.5 883.8 L918.5 882.6 L917.5 883.0 L916.5 882.7 L915.5 883.8 L914.5 884.1 L913.5 883.0 L912.5 883.8 L911.5 884.5 L910.5 883.6 L909.5 884.8 L908.5 883.6 L907.5 884.0 L906.5 884.9 L905.5 884.8 L904.5 884.0 L903.5 884.3 L902.5 885.5 L901.5 883.7 L900.5 884.4 L899.5 885.3 L898.5 886.4 L897.5 885.2 L896.5 883.9 L895.5 883.8 L894.5 885.0 L893.5 886.1 L892.5 886.5 L891.5 884.2 L890.5 887.7 L889.5 883.8 L888.5 886.3 L887.5 885.0 L886.5 884.3 L885.5 884.5 L884.5 881.0 L883.5 881.5 L882.5 881.8 L881.5 882.2 L880.5 881.6 L879.5 881.5 L878.5 882.6 L877.5 883.1 L876.5 881.9 L875.5 883.1 L874.5 883.9 L873.5 884.2 L872.5 884.1 L871.5 883.6 L870.5 883.2 L869.5 881.2 L868.5 881.3 L867.5 881.3 L866.5 881.9 L865.5 881.2 L864.5 881.6 L863.5 881.3 L862.5 881.6 L861.5 881.4 L860.5 882.1 L859.5 882.0 L858.5 881.7 L857.5 882.0 L856.5 881.1 L855.5 881.7 L854.5 881.7 L853.5 881.9 L852.5 882.0 L851.5 881.8 L850.5 881.8 L849.5 881.3 L848.5 881.1 L847.5 881.8 L846.5 882.3 L845.5 881.8 L844.5 882.3 L843.5 881.6 L842.5 882.1 L841.5 881.9 L840.5 881.4 L839.5 881.9 L838.5 881.7 L837.5 881.7 L836.5 881.8 L835.5 881.4 L834.5 881.6 L833.5 881.7 L832.5 882.0 L831.5 881.7 L830.5 881.4 L829.5 881.5 L828.5 881.5 L827.5 882.0 L826.5 882.1 L825.5 881.7 L824.5 881.4 L823.5 881.7 L822.5 881.6 L821.5 882.2 L820.5 882.0 L819.5 881.7 L818.5 882.1 L817.5 882.2 L816.5 882.3 L815.5 882.3 L814.5 881.8 L813.5 881.6 L812.5 882.1 L811.5 882.2 L810.5 881.5 L809.5 882.6 L808.5 882.0 L807.5 881.9 L806.5 881.5 L805.5 883.0 L804.5 882.0 L803.5 882.2 L802.5 882.3 L801.5 883.2 L800.5 884.1 L799.5 883.0 L798.5 885.1 L797.5 883.8 L796.5 881.9 L795.5 881.9 L794.5 882.5 L793.5 882.7 L792.5 882.1 L791.5 881.9 L790.5 882.0 L789.5 881.9 L788.5 881.8 L787.5 881.8 L786.5 882.5 L785.5 882.0 L784.5 882.4 L783.5 882.8 L782.5 883.0 L781.5 882.4 L780.5 883.7 L779.5 882.4 L778.5 882.1 L777.5 882.7 L776.5 881.9 L775.5 882.6 L774.5 882.1 L773.5 883.6 L772.5 883.7 L771.5 882.7 L770.5 882.2 L769.5 883.1 L768.5 883.0 L767.5 883.3 L766.5 883.2 L765.5 882.8 L764.5 883.1 L763.5 883.9 L762.5 882.2 L761.5 883.7 L760.5 883.6 L759.5 882.6 L758.5 883.6 L757.5 883.6 L756.5 883.3 L755.5 883.1 L754.5 883.4 L753.5 883.8 L752.5 884.5 L751.5 883.5 L750.5 884.3 L749.5 882.5 L748.5 884.2 L747.5 884.0 L746.5 884.1 L745.5 884.2 L744.5 886.2 L743.5 883.4 L742.5 886.5 L741.5 883.9 L740.5 885.7 L739.5 884.1 L738.5 883.9 L737.5 888.2 L736.5 888.4 L735.5 883.8 L734.5 885.9 L733.5 884.0 L732.5 884.2 L731.5 881.5 L730.5 882.0 L729.5 881.2 L728.5 881.3 L727.5 881.9 L726.5 881.7 L725.5 881.4 L724.5 881.6 L723.5 881.4 L722.5 881.8 L721.5 881.8 L720.5 881.3 L719.5 881.4 L718.5 881.4 L717.5 881.4 L716.5 882.1 L715.5 881.9 L714.5 881.3 L713.5 881.4 L712.5 882.1 L711.5 881.4 L710.5 885.2 L709.5 881.2 L708.5 881.3 L707.5 881.2 L706.5 882.4 L705.5 881.6 L704.5 881.9 L703.5 881.7 L702.5 881.8 L701.5 882.4 L700.5 882.4 L699.5 882.2 L698.5 882.7 L697.5 882.6 L696.5 883.3 L695.5 881.9 L694.5 883.1 L693.5 882.4 L692.5 881.9 L691.5 885.6 L690.5 882.9 L689.5 881.9 L688.5 881.5 L687.5 882.8 L686.5 882.5 L685.5 882.2 L684.5 882.9 L683.5 881.4 L682.5 881.5 L681.5 881.7 L680.5 881.6 L679.5 882.1 L678.5 881.9 L677.5 881.7 L676.5 881.9 L675.5 882.0 L674.5 882.7 L673.5 882.6 L672.5 882.7 L671.5 882.1 L670.5 883.1 L669.5 882.4 L668.5 882.4 L667.5 882.1 L666.5 881.9 L665.5 883.5 L664.5 883.1 L663.5 882.9 L662.5 882.4 L661.5 882.5 L660.5 882.3 L659.5 882.8 L658.5 883.1 L657.5 882.2 L656.5 883.2 L655.5 882.7 L654.5 882.1 L653.5 883.0 L652.5 883.5 L651.5 882.9 L650.5 882.8 L649.5 883.5 L648.5 882.7 L647.5 883.2 L646.5 882.6 L645.5 883.4 L644.5 884.0 L643.5 884.4 L642.5 883.1 L641.5 883.1 L640.5 882.9 L639.5 883.9 L638.5 885.1 L637.5 882.9 L636.5 884.3 L635.5 884.4 L634.5 884.3 L633.5 882.4 L632.5 884.1 L631.5 883.6 L630.5 884.3 L629.5 884.4 L628.5 887.9 L627.5 883.2 L626.5 885.9 L625.5 885.9 L624.5 885.4 L623.5 884.8 L622.5 885.0 L621.5 884.7 L620.5 883.2 L619.5 885.0 L618.5 884.4 L617.5 884.0 L616.5 884.2 L615.5 882.3 L614.5 882.9 L613.5 882.0 L612.5 882.6 L611.5 881.9 L610.5 882.6 L609.5 881.5 L608.5 882.7 L607.5 882.4 L606.5 882.0 L605.5 883.2 L604.5 882.1 L603.5 883.5 L602.5 883.1 L601.5 881.8 L600.5 883.1 L599.5 882.6 L598.5 883.3 L597.5 883.2 L596.5 882.9 L595.5 883.2 L594.5 882.5 L593.5 882.7 L592.5 881.9 L591.5 882.6 L590.5 882.1 L589.5 884.2 L588.5 882.7 L587.5 883.8 L586.5 882.5 L585.5 883.9 L584.5 883.1 L583.5 882.6 L582.5 883.2 L581.5 882.8 L580.5 881.9 L579.5 884.5 L578.5 881.9 L577.5 881.5 L576.5 882.2 L575.5 882.3 L574.5 882.3 L573.5 881.6 L572.5 882.0 L571.5 882.6 L570.5 882.2 L569.5 883.5 L568.5 882.9 L567.5 881.9 L566.5 882.4 L565.5 882.1 L564.5 881.7 L563.5 882.8 L562.5 882.0 L561.5 882.5 L560.5 881.5 L559.5 882.9 L558.5 882.3 L557.5 882.2 L556.5 881.6 L555.5 882.3 L554.5 882.3 L553.5 882.1 L552.5 883.3 L551.5 882.2 L550.5 882.4 L549.5 882.3 L548.5 883.2 L547.5 882.7 L546.5 882.2 L545.5 882.2 L544.5 881.7 L543.5 881.7 L542.5 881.3 L541.5 881.3 L540.5 881.7 L539.5 881.1 L538.5 881.1 L537.5 881.6 L536.5 880.9 L535.5 881.2 L534.5 881.6 L533.5 881.0 L532.5 881.0 L531.5 881.9 L530.5 881.2 L529.5 881.8 L528.5 881.2 L527.5 881.7 L526.5 881.0 L525.5 881.9 L524.5 881.7 L523.5 881.6 L522.5 881.6 L521.5 881.6 L520.5 881.3 L519.5 881.7 L518.5 881.5 L517.5 881.2 L516.5 882.2 L515.5 881.6 L514.5 881.8 L513.5 881.7 L512.5 881.1 L511.5 881.3 L510.5 881.9 L509.5 881.7 L508.5 881.7 L507.5 881.3 L506.5 881.5 L505.5 881.5 L504.5 881.4 L503.5 881.2 L502.5 881.3 L501.5 881.7 L500.5 881.4 L499.5 881.6 L498.5 881.5 L497.5 881.8 L496.5 882.2 L495.5 881.9 L494.5 881.2 L493.5 882.2 L492.5 881.6 L491.5 882.5 L490.5 882.4 L489.5 881.3 L488.5 881.8 L487.5 882.4 L486.5 881.9 L485.5 881.5 L484.5 881.7 L483.5 881.5 L482.5 881.6 L481.5 881.8 L480.5 881.8 L479.5 882.0 L478.5 882.6 L477.5 882.2 L476.5 882.7 L475.5 884.3 L474.5 882.7 L473.5 882.2 L472.5 882.3 L471.5 882.1 L470.5 882.9 L469.5 881.8 L468.5 882.2 L467.5 881.6 L466.5 883.1 L465.5 881.9 L464.5 882.9 L463.5 881.3 L462.5 881.5 L461.5 882.3 L460.5 881.7 L459.5 882.8 L458.5 882.0 L457.5 882.3 L456.5 882.5 L455.5 883.2 L454.5 882.7 L453.5 883.4 L452.5 882.6 L451.5 883.4 L450.5 882.2 L449.5 882.2 L448.5 882.3 L447.5 884.2 L446.5 882.9 L445.5 882.8 L444.5 882.3 L443.5 883.6 L442.5 884.3 L441.5 885.3 L440.5 884.2 L439.5 882.7 L438.5 882.5 L437.5 883.7 L436.5 883.9 L435.5 883.5 L434.5 886.0 L433.5 883.1 L432.5 886.0 L431.5 885.4 L430.5 884.0 L429.5 886.5 L428.5 882.9 L427.5 883.4 L426.5 880.9 L425.5 881.9 L424.5 881.6 L423.5 880.9 L422.5 881.6 L421.5 881.4 L420.5 881.0 L419.5 881.2 L418.5 881.4 L417.5 882.0 L416.5 882.0 L415.5 881.6 L414.5 881.5 L413.5 881.9 L412.5 881.1 L411.5 881.8 L410.5 881.6 L409.5 881.4 L408.5 881.9 L407.5 881.4 L406.5 881.4 L405.5 881.2 L404.5 881.3 L403.5 881.3 L402.5 881.7 L401.5 881.4 L400.5 881.5 L399.5 881.7 L398.5 881.6 L397.5 881.3 L396.5 881.5 L395.5 882.6 L394.5 881.1 L393.5 881.5 L392.5 881.5 L391.5 881.8 L390.5 881.2 L389.5 882.2 L388.5 881.2 L387.5 881.2 L386.5 881.5 L385.5 881.4 L384.5 881.5 L383.5 881.6 L382.5 881.4 L381.5 881.6 L380.5 882.2 L379.5 881.6 L378.5 881.8 L377.5 881.9 L376.5 881.8 L375.5 881.5 L374.5 881.4 L373.5 881.5 L372.5 881.8 L371.5 881.3 L370.5 882.0 L369.5 882.1 L368.5 882.0 L367.5 881.9 L366.5 882.8 L365.5 881.7 L364.5 881.7 L363.5 881.8 L362.5 882.2 L361.5 882.8 L360.5 882.1 L359.5 881.9 L358.5 881.7 L357.5 881.8 L356.5 883.5 L355.5 882.9 L354.5 882.8 L353.5 881.4 L352.5 881.8 L351.5 881.7 L350.5 881.7 L349.5 881.4 L348.5 881.4 L347.5 882.5 L346.5 882.6 L345.5 882.1 L344.5 881.7 L343.5 882.4 L342.5 882.1 L341.5 881.8 L340.5 881.5 L339.5 882.6 L338.5 881.2 L337.5 881.5 L336.5 881.7 L335.5 881.7 L334.5 881.6 L333.5 882.3 L332.5 882.7 L331.5 881.8 L330.5 882.0 L329.5 882.1 L328.5 882.0 L327.5 882.2 L326.5 882.1 L325.5 882.6 L324.5 881.9 L323.5 881.6 L322.5 882.3 L321.5 882.7 L320.5 882.6 L319.5 882.1 L318.5 882.5 L317.5 882.4 L316.5 881.9 L315.5 883.0 L314.5 882.0 L313.5 882.4 L312.5 882.5 L311.5 883.8 L310.5 883.3 L309.5 882.7 L308.5 882.2 L307.5 883.1 L306.5 882.3 L305.5 882.9 L304.5 883.2 L303.5 882.8 L302.5 883.1 L301.5 881.7 L300.5 882.9 L299.5 883.8 L298.5 882.5 L297.5 883.0 L296.5 882.0 L295.5 882.8 L294.5 883.6 L293.5 883.2 L292.5 884.1 L291.5 882.8 L290.5 884.2 L289.5 883.0 L288.5 883.3 L287.5 883.8 L286.5 882.8 L285.5 882.8 L284.5 884.1 L283.5 884.5 L282.5 884.0 L281.5 883.4 L280.5 883.5 L279.5 883.6 L278.5 883.5 L277.5 883.9 L276.5 883.1 L275.5 881.7 L274.5 882.1 L273.5 881.3 L272.5 881.3 L271.5 881.6 L270.5 881.0 L269.5 881.7 L268.5 881.1 L267.5 881.5 L266.5 881.1 L265.5 881.4 L264.5 881.3 L263.5 881.7 L262.5 881.2 L261.5 881.0 L260.5 881.1 L259.5 880.9 L258.5 880.9 L257.5 880.9 L256.5 881.2 L255.5 881.5 L254.5 880.8 L253.5 881.1 L252.5 881.2 L251.5 881.0 L250.5 881.1 L249.5 881.1 L248.5 881.1 L247.5 881.1 L246.5 881.2 L245.5 881.2 L244.5 881.2 L243.5 881.1 L242.5 881.2 L241.5 881.0 L240.5 881.8 L239.5 881.0 L238.5 881.3 L237.5 881.1 L236.5 881.0 L235.5 881.5 L234.5 881.4 L233.5 881.1 L232.5 881.2 L231.5 881.0 L230.5 881.3 L229.5 881.1 L228.5 881.0 L227.5 880.9 L226.5 881.3 L225.5 881.2 L224.5 880.8 L223.5 881.2 L222.5 881.3 L221.5 881.4 L220.5 881.5 L219.5 881.1 L218.5 881.3 L217.5 881.1 L216.5 880.8 Z" fill="#ad9ba3"/><polygon points="226.8,904.8 240.4,856.6 317.1,856.6 333.9,904.8" fill="rgba(31,200,143,0.23)"/><path d="M226.8 904.8 L240.4 857.5 M317.1 857.5 L333.9 904.8" stroke="#1fc88f" stroke-width="2.1" fill="none"/><path d="M233.9 856.6 A6.7 4.6 0 0 0 247.3 856.6 Z M310.2 856.6 A6.7 4.6 0 0 0 323.6 856.6 Z" fill="#1fcc93"/></svg>
<div class="clip" style="left:1235.7px;top:909px;width:408.7px;background:#76265f;"></div>
<svg style="left:1249.5px;top:921.3px;" width="24" height="24" viewBox="0 0 24 24"><rect x="2.3" y="2.3" width="11" height="11.4" rx="2.4" fill="none" stroke="#fff" stroke-width="2.7"/><rect x="7.6" y="6.9" width="15.4" height="15.6" rx="3.4" fill="#fff" stroke="#76265f" stroke-width="1.6"/><path d="M12.8 11.2 L17.8 14.6 L12.8 18 Z" fill="#76265f"/></svg>
<div class="ct" style="left:1281px;top:921.5px;">前景特效（建议不动</div>
<div class="clip" style="left:1181.5px;top:961.5px;width:428.5px;background:#76265f;"></div>
<svg style="left:1195px;top:973.8px;" width="24" height="24" viewBox="0 0 24 24"><rect x="2.3" y="2.3" width="11" height="11.4" rx="2.4" fill="none" stroke="#fff" stroke-width="2.7"/><rect x="7.6" y="6.9" width="15.4" height="15.6" rx="3.4" fill="#fff" stroke="#76265f" stroke-width="1.6"/><path d="M12.8 11.2 L17.8 14.6 L12.8 18 Z" fill="#76265f"/></svg>
<div class="ct" style="left:1227px;top:974px;">标题</div>
<svg style="left:400px;top:650px;" width="40" height="365" viewBox="400 650 40 365"><path d="M405.3 660 Q405.3 655.6 409.7 655.6 H426.9 Q431.3 655.6 431.3 660 V668 L418.3 681.5 L405.3 668 Z" fill="#ffae45"/><path d="M418.3 680 V1010.5" stroke="#ffae45" stroke-width="1.6"/></svg>
</div>
</body></html>
